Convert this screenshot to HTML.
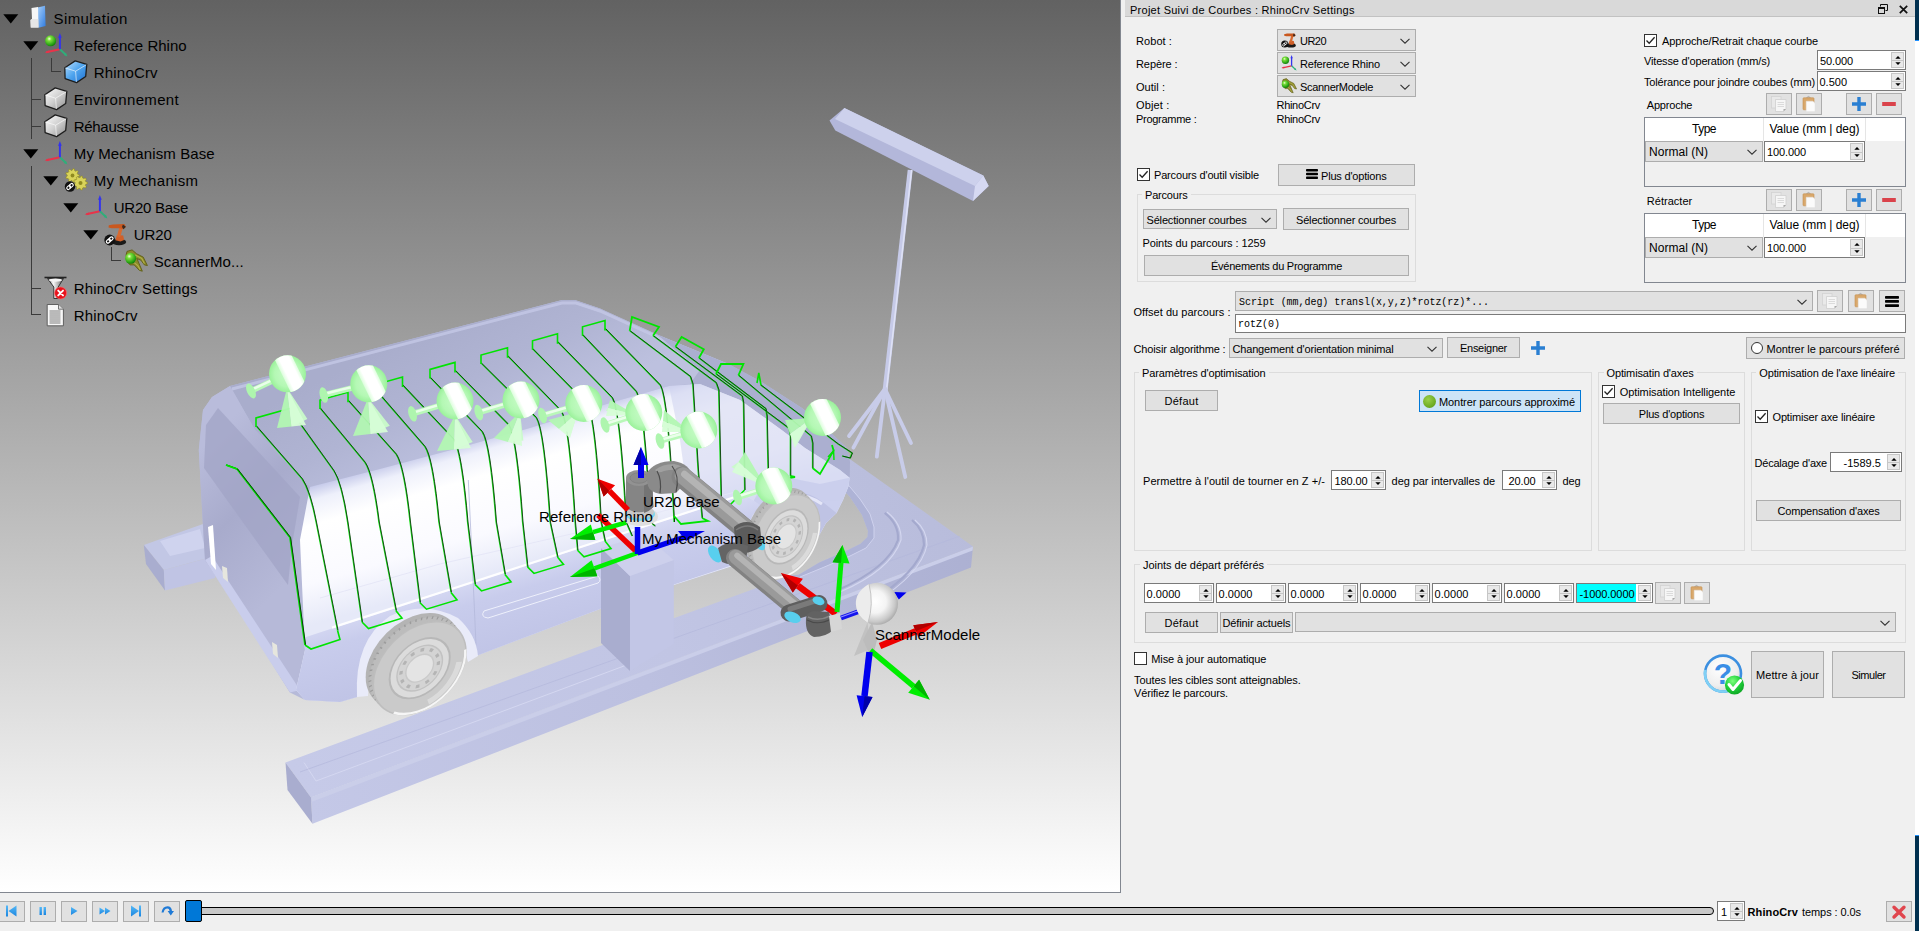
<!DOCTYPE html>
<html lang="fr"><head><meta charset="utf-8"><title>RoboDK - Projet Suivi de Courbes</title>
<style>
html,body{margin:0;padding:0;}
body{width:1919px;height:931px;overflow:hidden;position:relative;background:#f0f0f0;font-family:"Liberation Sans",sans-serif;font-size:11px;color:#000;}
#view{position:absolute;left:0;top:0;width:1120px;height:892px;background:linear-gradient(#626262,#ffffff);overflow:hidden;}
#view svg{position:absolute;left:0;top:0;}
.t{position:absolute;white-space:pre;line-height:1;}
.b{position:absolute;box-sizing:border-box;}
.btn{position:absolute;box-sizing:border-box;background:#e1e1e1;border:1px solid #adadad;}
.cmb{position:absolute;box-sizing:border-box;background:#e1e1e1;border:1px solid #adadad;}
.spn{position:absolute;box-sizing:border-box;background:#fff;border:1px solid #7a7a7a;}
.grp{position:absolute;box-sizing:border-box;border:1px solid #dcdcdc;}
.chk{position:absolute;box-sizing:border-box;width:13px;height:13px;background:#fff;border:1px solid #333;}
svg{display:block;overflow:visible;}

</style></head>
<body>
<svg width="0" height="0" style="position:absolute"><defs><radialGradient id="gsph" cx="0.38" cy="0.32" r="0.75"><stop offset="0" stop-color="#f4ffe0"/><stop offset="0.25" stop-color="#7be03a"/><stop offset="0.8" stop-color="#1f9a10"/><stop offset="1" stop-color="#0d6a08"/></radialGradient><linearGradient id="gblue" x1="0" y1="0" x2="0" y2="1"><stop offset="0" stop-color="#55b8f6"/><stop offset="1" stop-color="#1b86e0"/></linearGradient><linearGradient id="gcubeb" x1="0" y1="0" x2="1" y2="1"><stop offset="0" stop-color="#bfe2ff"/><stop offset="0.5" stop-color="#4ea4ee"/><stop offset="1" stop-color="#1e6fd0"/></linearGradient><linearGradient id="gcubeg" x1="0" y1="0" x2="1" y2="1"><stop offset="0" stop-color="#ffffff"/><stop offset="0.5" stop-color="#d0d0d0"/><stop offset="1" stop-color="#8c8c8c"/></linearGradient><radialGradient id="ghelp" cx="0.4" cy="0.35" r="0.7"><stop offset="0" stop-color="#ffffff"/><stop offset="0.7" stop-color="#eeeeee"/><stop offset="1" stop-color="#d4d4d4"/></radialGradient><radialGradient id="gok" cx="0.4" cy="0.3" r="0.8"><stop offset="0" stop-color="#7dff7d"/><stop offset="0.5" stop-color="#1fd13a"/><stop offset="1" stop-color="#0a9a1e"/></radialGradient></defs></svg>
<div id="view"><svg width="1120" height="892" viewBox="0 0 1120 892">
<defs>
<linearGradient id="bgg" gradientUnits="userSpaceOnUse" x1="0" y1="0" x2="0" y2="892"><stop offset="0" stop-color="#626262"/><stop offset="1" stop-color="#ffffff"/></linearGradient>
<radialGradient id="gtar" cx="0.5" cy="0.5" r="0.5"><stop offset="0" stop-color="#c8fbc8"/><stop offset="0.7" stop-color="#b4f8b4"/><stop offset="1" stop-color="#9af19a"/></radialGradient>
<linearGradient id="gband" x1="0" y1="0" x2="1" y2="0"><stop offset="0" stop-color="#dcfedc"/><stop offset="0.25" stop-color="#ffffff"/><stop offset="0.8" stop-color="#ffffff"/><stop offset="1" stop-color="#e0fee0"/></linearGradient>
<linearGradient id="gside" gradientUnits="userSpaceOnUse" x1="455" y1="445" x2="492" y2="573"><stop offset="0" stop-color="#c6caea"/><stop offset="0.1" stop-color="#eef0fb"/><stop offset="0.28" stop-color="#ffffff"/><stop offset="0.7" stop-color="#fafaff"/><stop offset="1" stop-color="#e6e9f8"/></linearGradient>
<linearGradient id="glow" gradientUnits="userSpaceOnUse" x1="492" y1="573" x2="515" y2="650"><stop offset="0" stop-color="#d6d9f3"/><stop offset="0.3" stop-color="#c8ccec"/><stop offset="1" stop-color="#c0c4e6"/></linearGradient>
<linearGradient id="groof" gradientUnits="userSpaceOnUse" x1="380" y1="350" x2="440" y2="470"><stop offset="0" stop-color="#a9adcc"/><stop offset="0.5" stop-color="#b0b4d3"/><stop offset="1" stop-color="#bdc1df"/></linearGradient>
<linearGradient id="grear" gradientUnits="userSpaceOnUse" x1="200" y1="450" x2="310" y2="560"><stop offset="0" stop-color="#b9bcdb"/><stop offset="0.45" stop-color="#a8abcc"/><stop offset="1" stop-color="#b6b9d8"/></linearGradient>
<linearGradient id="gcab" gradientUnits="userSpaceOnUse" x1="700" y1="360" x2="800" y2="520"><stop offset="0" stop-color="#b9bee0"/><stop offset="0.5" stop-color="#d5d8f0"/><stop offset="1" stop-color="#bfc4e6"/></linearGradient>
<linearGradient id="gtop" gradientUnits="userSpaceOnUse" x1="300" y1="790" x2="960" y2="500"><stop offset="0" stop-color="#c6cae8"/><stop offset="0.55" stop-color="#c1c5e4"/><stop offset="1" stop-color="#b8bcdb"/></linearGradient>
<linearGradient id="gfront" gradientUnits="userSpaceOnUse" x1="300" y1="790" x2="960" y2="500"><stop offset="0" stop-color="#c4c8e7"/><stop offset="0.5" stop-color="#bcc0e0"/><stop offset="1" stop-color="#acb0d2"/></linearGradient>
<radialGradient id="gwheel" cx="0.45" cy="0.45" r="0.6"><stop offset="0" stop-color="#f2f2f2"/><stop offset="0.7" stop-color="#dedede"/><stop offset="1" stop-color="#c4c4c4"/></radialGradient>
<linearGradient id="garm" x1="0" y1="0" x2="1" y2="1"><stop offset="0" stop-color="#8e8e8e"/><stop offset="0.5" stop-color="#7a7a7a"/><stop offset="1" stop-color="#5c5c5c"/></linearGradient>
<radialGradient id="gsc" cx="0.45" cy="0.45" r="0.6"><stop offset="0" stop-color="#ffffff"/><stop offset="0.45" stop-color="#f4f4f4"/><stop offset="0.8" stop-color="#c8c8c8"/><stop offset="1" stop-color="#a0a0a0"/></radialGradient>
</defs>
<polygon points="844.4,108.0 983.3,175.6 988.7,186.0 973.0,201.0 835.3,130.5 829.5,120.6" fill="#b3b7da" />
<polygon points="844.4,108.0 983.3,175.6 975.0,186.0 835.0,119.0" fill="#cdd1ec" />
<polygon points="983.3,175.6 988.7,186.0 973.0,201.0 975.0,186.0" fill="#d6d9f2" />
<line x1="910.2" y1="170" x2="885" y2="391" stroke="#c6cae8" stroke-width="5"/>
<line x1="911.6" y1="170" x2="886.4" y2="391" stroke="#dfe2f5" stroke-width="1.5"/>
<line x1="885" y1="389" x2="853.4" y2="447.7" stroke="#c8cce9" stroke-width="3.8" stroke-linecap="round"/>
<line x1="885" y1="389" x2="849" y2="436" stroke="#c8cce9" stroke-width="3.8" stroke-linecap="round"/>
<line x1="885" y1="389" x2="876.8" y2="456.7" stroke="#c8cce9" stroke-width="3.8" stroke-linecap="round"/>
<line x1="885" y1="389" x2="905.3" y2="477" stroke="#c8cce9" stroke-width="3.8" stroke-linecap="round"/>
<line x1="885" y1="389" x2="911" y2="443" stroke="#c8cce9" stroke-width="3.8" stroke-linecap="round"/>
<polygon points="143.8,545.0 203.0,524.0 215.0,556.0 163.8,570.0" fill="#c2c7e5" />
<polygon points="143.8,545.0 163.8,570.0 165.0,590.5 146.0,564.0" fill="#a9adcf" />
<polygon points="163.8,570.0 215.0,556.0 215.0,578.0 165.0,590.5" fill="#c0c4e4" />
<polygon points="160.0,541.0 200.0,529.0 205.0,548.0 170.0,556.0" fill="#cfd3ee" />
<polygon points="285.5,762.5 600.0,646.0 673.0,618.5 790.0,575.6 798.7,574.7 819.4,562.6 847.0,550.6 860.6,543.7 867.5,537.0 868.0,531.0 862.0,515.0 850.0,497.0 838.0,484.0 843.4,454.4 973.0,546.5 311.0,797.5" fill="url(#gtop)" />
<polygon points="311.0,797.5 973.0,546.5 971.0,567.5 312.5,823.8" fill="url(#gfront)" />
<polygon points="311.0,797.5 973.0,546.5 972.6,550.5 311.3,802.0" fill="#cacee9" />
<polygon points="285.5,762.5 311.0,797.5 312.5,823.8 287.5,790.0" fill="#a9adcf" />
<polyline points="304.0,762.5 316.0,781.0 640.0,660.0" fill="none" stroke="#d4d7f0" stroke-width="1" />
<polyline points="300.0,772.0 960.0,536.0" fill="none" stroke="#b4b8dc" stroke-width="1" stroke-opacity="0.7"/>
<polygon points="790.0,575.6 798.7,574.7 819.4,562.6 847.0,550.6 860.6,543.7 867.5,537.0 868.0,531.0 862.0,515.0 850.0,497.0 838.0,484.0 840.0,478.0 848.6,485.3 860.0,499.0 870.0,514.0 874.0,527.0 874.0,538.0 866.0,548.0 850.0,556.0 822.0,568.0 800.0,577.0" fill="#aeb3d6" />
<polyline points="800.0,577.0 822.0,568.0 850.0,556.0 866.0,548.0 874.0,538.0 874.0,527.0 870.0,514.0 860.0,499.0 848.6,485.3 840.0,478.0" fill="none" stroke="#cfd2ee" stroke-width="1" />
<path d="M838 590 Q888 568 898 540 Q899 524 884.7 512.8" fill="none" stroke="#a4a9ce" stroke-width="2.2" />
<path d="M840 592 Q891 570 901 540 Q902 524 887 512" fill="none" stroke="#d4d7f0" stroke-width="1.1" />
<path d="M872 601 Q918 572 924 545 Q924 530 912 520" fill="none" stroke="#a4a9ce" stroke-width="2.2" />
<path d="M874 603 Q921 574 927 545 Q927 530 915 520" fill="none" stroke="#d4d7f0" stroke-width="1.1" />
<polygon points="230.0,386.0 562.0,300.0 575.0,300.0 600.0,308.5 657.0,334.5 728.5,364.0 760.0,381.0 802.7,408.6 830.0,432.0 847.0,448.0 850.0,462.0 849.6,477.8 848.6,486.0 843.0,500.0 836.5,513.0 826.0,523.0 812.0,548.0 800.0,562.0 745.0,562.0 600.0,609.0 476.0,656.0 474.0,640.0 456.0,622.0 430.0,611.0 400.0,614.0 375.0,632.0 362.0,660.0 357.0,697.0 340.0,702.0 305.0,700.0 290.0,692.5 245.0,620.0 205.0,560.0 202.5,517.5 198.8,450.0 203.0,410.0 212.0,397.0" fill="#b6bad9" />
<polygon points="230.0,386.0 562.0,300.0 575.0,300.0 600.0,308.5 657.0,334.5 728.5,364.0 700.0,370.0 690.0,384.0 669.0,386.0 610.0,403.0 530.0,428.0 455.0,449.0 380.0,469.0 310.0,487.0 255.0,430.0" fill="url(#groof)" />
<polyline points="232.0,389.0 562.0,303.0 576.0,303.0 600.0,311.0 657.0,337.0 728.0,367.0" fill="none" stroke="#c4c8e6" stroke-width="3" stroke-opacity="0.8"/>
<polygon points="203.0,410.0 212.0,397.0 230.0,386.0 255.0,430.0 310.0,487.0 300.0,540.0 305.0,650.0 296.0,690.0 290.0,692.5 245.0,620.0 205.0,560.0 202.5,517.5 198.8,450.0" fill="url(#grear)" />
<polygon points="206.0,425.0 218.0,408.0 300.0,497.0 292.0,545.0 288.0,585.0 204.0,468.0" fill="#a1a4c6" fill-opacity="0.75"/>
<polygon points="205.0,560.0 212.0,556.0 300.0,690.0 290.0,692.5" fill="#c9cdec" />
<polygon points="208.0,527.0 213.0,525.0 216.0,570.0 211.0,564.0" fill="#ffffff" />
<polygon points="222.0,566.0 227.0,568.0 228.0,582.0 223.0,578.0" fill="#e6e6de" />
<polygon points="272.0,642.0 277.0,645.0 278.0,658.0 273.0,654.0" fill="#e6e6de" />
<polygon points="657.0,334.5 728.5,364.0 760.0,381.0 802.7,408.6 830.0,432.0 847.0,448.0 850.0,462.0 849.6,477.8 840.0,470.0 805.0,448.0 783.0,431.0 740.0,400.0 700.0,384.0 690.0,384.0 700.0,370.0" fill="#abafd0" />
<polygon points="310.0,487.0 380.0,469.0 455.0,449.0 530.0,428.0 610.0,403.0 669.0,386.0 700.0,384.0 740.0,400.0 783.0,431.0 805.0,448.0 840.0,470.0 849.6,477.8 848.6,486.0 843.0,500.0 836.5,513.0 826.0,523.0 812.0,548.0 800.0,562.0 745.0,562.0 600.0,609.0 476.0,656.0 474.0,640.0 456.0,622.0 430.0,611.0 400.0,614.0 375.0,632.0 362.0,660.0 357.0,697.0 340.0,702.0 305.0,700.0 296.0,690.0 305.0,650.0 300.0,540.0" fill="url(#gside)" />
<polygon points="669.0,386.0 700.0,384.0 740.0,400.0 783.0,431.0 805.0,448.0 840.0,470.0 849.6,477.8 843.0,500.0 760.0,505.0 745.0,494.7 690.0,512.0 680.0,440.0" fill="#cdd1ee" fill-opacity="0.55"/>
<polygon points="742.0,520.0 760.0,490.0 790.0,478.0 820.0,484.0 849.6,477.8 848.6,486.0 843.0,500.0 836.5,513.0 826.0,523.0 818.0,508.0 800.0,494.0 775.0,496.0 755.0,515.0 748.0,545.0 745.0,562.0 738.0,562.0" fill="#c9cdec" fill-opacity="0.9"/>
<polygon points="303.0,638.0 332.0,628.6 470.0,584.0 600.0,541.7 745.0,494.7 760.0,505.0 748.0,560.0 600.0,609.0 476.0,656.0 474.0,640.0 456.0,622.0 430.0,611.0 400.0,614.0 375.0,632.0 362.0,660.0 357.0,697.0 340.0,702.0 305.0,700.0 296.0,690.0 305.0,650.0" fill="url(#glow)" />
<polyline points="332.0,627.6 470.0,583.0 600.0,540.7 745.0,493.7" fill="none" stroke="#ffffff" stroke-width="2.2" stroke-opacity="0.95"/>
<polyline points="320.0,598.0 440.0,564.0 612.0,524.7 735.0,492.0" fill="none" stroke="#e4e6f6" stroke-width="1" stroke-opacity="0.9"/>
<path d="M484 611 L598 576 Q602 580 598 583 L488 618 Q480 617 484 611 Z" fill="none" stroke="#eef0fb" stroke-width="1" />
<polyline points="468.3,480.0 470.5,525.0 474.0,600.0 476.0,645.0" fill="none" stroke="#b4b9da" stroke-width="0.8" />
<path d="M357 697 Q354 640 390 616 Q425 600 458 618 Q476 634 478 656 L468 662 Q462 640 448 630 Q424 618 398 628 Q368 648 368 696 Z" fill="#e9ebf9" />
<g transform="matrix(47 -17 0 44 412.7 660.2)"><circle r="1" fill="#b4b4b4"/></g><g transform="matrix(47 -17 0 44 416.2 664.2)"><circle r="1" fill="#bcbcbc"/></g><g transform="matrix(47 -17 0 44 415.5 663.4)"><circle r="0.97" fill="none" stroke="#9c9c9c" stroke-width="0.06" stroke-dasharray="0.03 0.09"/></g><g transform="matrix(47 -17 0 44 419.7 668.2)"><circle r="1" fill="#bebebe"/><circle r="0.97" fill="#cacaca"/><circle r="0.66" fill="#b8b8b8"/><circle r="0.62" fill="#dcdcdc"/><circle r="0.50" fill="#c2c2c2"/><circle r="0.47" fill="#d4d4d4"/><circle r="0.40" fill="none" stroke="#b4b4b4" stroke-width="0.07" stroke-dasharray="0.08 0.13"/><circle r="0.31" fill="#c9c9c9"/><circle r="0.28" fill="#e4e4e4"/></g><g transform="matrix(47 -17 0 44 419.7 668.2)"><path d="M-0.55 0.80 A0.97 0.97 0 0 0 0.97 -0.05" fill="none" stroke="#f6f6f6" stroke-width="0.05"/><path d="M0.2 0.9 A0.92 0.92 0 0 0 0.9 0.2 L0.78 0.16 A0.8 0.8 0 0 1 0.16 0.78 Z" fill="#e2e2e2" fill-opacity="0.7"/></g>
<path d="M745 562 Q740 520 768 498 Q800 484 824 503 L836.5 513 L826 523 L812 548 L800 562 Z" fill="#bfc3e4" />
<path d="M748 545 Q746 515 770 500 Q798 488 822 504" fill="none" stroke="#e4e6f8" stroke-width="3" />
<g transform="matrix(34.5 -13 0 40.5 780.0 530.5)"><circle r="1" fill="#b4b4b4"/></g><g transform="matrix(34.5 -13 0 40.5 783.0 533.5)"><circle r="1" fill="#bcbcbc"/></g><g transform="matrix(34.5 -13 0 40.5 782.4 532.9)"><circle r="0.97" fill="none" stroke="#9c9c9c" stroke-width="0.06" stroke-dasharray="0.03 0.09"/></g><g transform="matrix(34.5 -13 0 40.5 786.0 536.5)"><circle r="1" fill="#bebebe"/><circle r="0.97" fill="#cacaca"/><circle r="0.66" fill="#b8b8b8"/><circle r="0.62" fill="#dcdcdc"/><circle r="0.50" fill="#c2c2c2"/><circle r="0.47" fill="#d4d4d4"/><circle r="0.40" fill="none" stroke="#b4b4b4" stroke-width="0.07" stroke-dasharray="0.08 0.13"/><circle r="0.31" fill="#c9c9c9"/><circle r="0.28" fill="#e4e4e4"/></g><g transform="matrix(34.5 -13 0 40.5 786.0 536.5)"><path d="M-0.55 0.80 A0.97 0.97 0 0 0 0.97 -0.05" fill="none" stroke="#f6f6f6" stroke-width="0.05"/><path d="M0.2 0.9 A0.92 0.92 0 0 0 0.9 0.2 L0.78 0.16 A0.8 0.8 0 0 1 0.16 0.78 Z" fill="#e2e2e2" fill-opacity="0.7"/></g>
<polygon points="601.0,548.0 630.0,576.0 630.0,671.0 601.0,643.0" fill="#a9adcf" />
<polygon points="630.0,576.0 673.8,560.0 673.8,644.0 630.0,671.0" fill="#c2c6e6" />
<polygon points="601.0,548.0 630.0,576.0 673.8,560.0 645.0,535.0" fill="#cdd0ec" />
<path d="M256.0 425.9 L302.0 478.8 Q310.0 490.8 316.0 522 L337.5 630.2" fill="none" stroke="#00e400" stroke-width="1.25" stroke-opacity="0.9"/><path d="M256.0 425.9 L302.0 478.8 Q310.0 490.8 316.0 522 L337.5 630.2" fill="none" stroke="#0c3a0c" stroke-width="0.9" transform="translate(0.5 0)"/><path d="M294.0 415.3 L333.5 470.5 Q341.5 482.5 347.5 522 L362.0 622.0" fill="none" stroke="#00e400" stroke-width="1.25" stroke-opacity="0.9"/><path d="M294.0 415.3 L333.5 470.5 Q341.5 482.5 347.5 522 L362.0 622.0" fill="none" stroke="#0c3a0c" stroke-width="0.9" transform="translate(0.5 0)"/><path d="M320.0 408.1 L364.8 462.3 Q372.8 474.3 378.8 522 L396.0 610.7" fill="none" stroke="#00e400" stroke-width="1.25" stroke-opacity="0.9"/><path d="M320.0 408.1 L364.8 462.3 Q372.8 474.3 378.8 522 L396.0 610.7" fill="none" stroke="#0c3a0c" stroke-width="0.9" transform="translate(0.5 0)"/><path d="M348.0 400.3 L396.0 454.2 Q404.0 466.2 410.0 522 L420.0 602.7" fill="none" stroke="#00e400" stroke-width="1.25" stroke-opacity="0.9"/><path d="M348.0 400.3 L396.0 454.2 Q404.0 466.2 410.0 522 L420.0 602.7" fill="none" stroke="#0c3a0c" stroke-width="0.9" transform="translate(0.5 0)"/><path d="M377.5 392.0 L424.8 446.6 Q432.8 458.6 438.8 522 L451.0 592.4" fill="none" stroke="#00e400" stroke-width="1.25" stroke-opacity="0.9"/><path d="M377.5 392.0 L424.8 446.6 Q432.8 458.6 438.8 522 L451.0 592.4" fill="none" stroke="#0c3a0c" stroke-width="0.9" transform="translate(0.5 0)"/><path d="M402.5 385.0 L453.5 439.1 Q461.5 451.1 467.5 522 L475.0 584.4" fill="none" stroke="#00e400" stroke-width="1.25" stroke-opacity="0.9"/><path d="M402.5 385.0 L453.5 439.1 Q461.5 451.1 467.5 522 L475.0 584.4" fill="none" stroke="#0c3a0c" stroke-width="0.9" transform="translate(0.5 0)"/><path d="M430.0 377.4 L482.0 431.6 Q490.0 443.6 496.0 522 L505.0 574.4" fill="none" stroke="#00e400" stroke-width="1.25" stroke-opacity="0.9"/><path d="M430.0 377.4 L482.0 431.6 Q490.0 443.6 496.0 522 L505.0 574.4" fill="none" stroke="#0c3a0c" stroke-width="0.9" transform="translate(0.5 0)"/><path d="M455.0 370.4 L508.5 424.7 Q516.5 436.7 522.5 522 L527.5 566.9" fill="none" stroke="#00e400" stroke-width="1.25" stroke-opacity="0.9"/><path d="M455.0 370.4 L508.5 424.7 Q516.5 436.7 522.5 522 L527.5 566.9" fill="none" stroke="#0c3a0c" stroke-width="0.9" transform="translate(0.5 0)"/><path d="M481.0 363.1 L536.0 417.5 Q544.0 429.5 550.0 522 L557.5 556.9" fill="none" stroke="#00e400" stroke-width="1.25" stroke-opacity="0.9"/><path d="M481.0 363.1 L536.0 417.5 Q544.0 429.5 550.0 522 L557.5 556.9" fill="none" stroke="#0c3a0c" stroke-width="0.9" transform="translate(0.5 0)"/><path d="M507.5 355.8 L561.0 410.9 Q569.0 422.9 575.0 522 L577.5 550.3" fill="none" stroke="#00e400" stroke-width="1.25" stroke-opacity="0.9"/><path d="M507.5 355.8 L561.0 410.9 Q569.0 422.9 575.0 522 L577.5 550.3" fill="none" stroke="#0c3a0c" stroke-width="0.9" transform="translate(0.5 0)"/><path d="M532.5 348.8 L587.0 404.1 Q595.0 416.1 601.0 522 L605.0 541.1" fill="none" stroke="#00e400" stroke-width="1.25" stroke-opacity="0.9"/><path d="M532.5 348.8 L587.0 404.1 Q595.0 416.1 601.0 522 L605.0 541.1" fill="none" stroke="#0c3a0c" stroke-width="0.9" transform="translate(0.5 0)"/><path d="M557.5 341.8 L612.0 397.6 Q620.0 409.6 626.0 522 L632.0 536.0" fill="none" stroke="#00e400" stroke-width="1.25" stroke-opacity="0.9"/><path d="M557.5 341.8 L612.0 397.6 Q620.0 409.6 626.0 522 L632.0 536.0" fill="none" stroke="#0c3a0c" stroke-width="0.9" transform="translate(0.5 0)"/><path d="M582.5 334.8 L636.0 391.3 Q644.0 403.3 650.0 522 L655.0 526.0" fill="none" stroke="#00e400" stroke-width="1.25" stroke-opacity="0.9"/><path d="M582.5 334.8 L636.0 391.3 Q644.0 403.3 650.0 522 L655.0 526.0" fill="none" stroke="#0c3a0c" stroke-width="0.9" transform="translate(0.5 0)"/><path d="M605.0 328.5 L660.0 385.0 Q668.0 397.0 674.0 522 L674.0 516.0" fill="none" stroke="#00e400" stroke-width="1.25" stroke-opacity="0.9"/><path d="M605.0 328.5 L660.0 385.0 Q668.0 397.0 674.0 522 L674.0 516.0" fill="none" stroke="#0c3a0c" stroke-width="0.9" transform="translate(0.5 0)"/><polyline points="256.0,426.9 256.0,417.9 294.0,407.3 294.0,417.3" fill="none" stroke="#00e400" stroke-width="1.6" /><polyline points="320.0,409.1 320.0,400.1 348.0,392.3 348.0,402.3" fill="none" stroke="#00e400" stroke-width="1.6" /><polyline points="377.5,393.0 377.5,384.0 402.5,377.0 402.5,387.0" fill="none" stroke="#00e400" stroke-width="1.6" /><polyline points="430.0,378.4 430.0,369.4 455.0,362.4 455.0,372.4" fill="none" stroke="#00e400" stroke-width="1.6" /><polyline points="481.0,364.1 481.0,355.1 507.5,347.8 507.5,357.8" fill="none" stroke="#00e400" stroke-width="1.6" /><polyline points="532.5,349.8 532.5,340.8 557.5,333.8 557.5,343.8" fill="none" stroke="#00e400" stroke-width="1.6" /><polyline points="582.5,335.8 582.5,326.8 605.0,320.5 605.0,330.5" fill="none" stroke="#00e400" stroke-width="1.6" /><polyline points="226.0,465.0 237.0,469.0 290.0,537.5 305.0,645.0" fill="none" stroke="#00e400" stroke-width="1.8" /><polyline points="226.6,465.0 237.6,469.0 290.6,537.5 305.6,645.0" fill="none" stroke="#0c3a0c" stroke-width="1.0" /><polyline points="226.0,465.0 237.0,469.0" fill="none" stroke="#00e400" stroke-width="1.6" /><polyline points="305.0,645.0 311.0,649.0 340.0,639.5 337.5,630.2" fill="none" stroke="#00e400" stroke-width="1.6" /><polyline points="362.0,622.0 368.5,628.5 402.0,618.2 396.0,610.7" fill="none" stroke="#00e400" stroke-width="1.6" /><polyline points="420.0,602.7 426.5,609.2 457.0,599.9 451.0,592.4" fill="none" stroke="#00e400" stroke-width="1.6" /><polyline points="475.0,584.4 481.5,590.9 511.0,581.9 505.0,574.4" fill="none" stroke="#00e400" stroke-width="1.6" /><polyline points="527.5,566.9 534.0,573.4 563.5,564.4 557.5,556.9" fill="none" stroke="#00e400" stroke-width="1.6" /><polyline points="577.5,550.3 584.0,556.8 611.0,548.6 605.0,541.1" fill="none" stroke="#00e400" stroke-width="1.6" /><polyline points="629.7,330.8 690.2,376.5 692.7,384.0 698.0,470.0 702.0,518.0" fill="none" stroke="#00e400" stroke-width="1.25" stroke-opacity="0.9"/><polyline points="630.2,330.8 690.7,376.5 693.2,384.0 698.5,470.0 702.5,518.0" fill="none" stroke="#0c3a0c" stroke-width="0.9" /><polyline points="653.0,335.7 716.0,382.7 718.6,390.0 721.0,497.0 724.0,512.0" fill="none" stroke="#00e400" stroke-width="1.25" stroke-opacity="0.9"/><polyline points="653.5,335.7 716.5,382.7 719.1,390.0 721.5,497.0 724.5,512.0" fill="none" stroke="#0c3a0c" stroke-width="0.9" /><polyline points="675.4,346.8 742.0,396.0 743.4,403.0 744.6,490.0" fill="none" stroke="#00e400" stroke-width="1.25" stroke-opacity="0.9"/><polyline points="675.9,346.8 742.5,396.0 743.9,403.0 745.1,490.0" fill="none" stroke="#0c3a0c" stroke-width="0.9" /><polyline points="698.9,358.0 765.6,408.6 766.8,416.0 768.0,470.0" fill="none" stroke="#00e400" stroke-width="1.25" stroke-opacity="0.9"/><polyline points="699.4,358.0 766.1,408.6 767.3,416.0 768.5,470.0" fill="none" stroke="#0c3a0c" stroke-width="0.9" /><polyline points="716.0,374.0 789.0,428.4 790.3,436.0 790.3,476.0" fill="none" stroke="#00e400" stroke-width="1.25" stroke-opacity="0.9"/><polyline points="716.5,374.0 789.5,428.4 790.8,436.0 790.8,476.0" fill="none" stroke="#0c3a0c" stroke-width="0.9" /><polyline points="738.4,375.3 811.0,436.0 812.5,443.0 812.5,468.0" fill="none" stroke="#00e400" stroke-width="1.25" stroke-opacity="0.9"/><polyline points="738.9,375.3 811.5,436.0 813.0,443.0 813.0,468.0" fill="none" stroke="#0c3a0c" stroke-width="0.9" /><polyline points="760.6,385.0 838.0,444.0 852.0,453.0 850.0,458.0 842.0,456.0" fill="none" stroke="#00e400" stroke-width="1.25" stroke-opacity="0.9"/><polyline points="761.1,385.0 838.5,444.0 852.5,453.0 850.5,458.0 842.5,456.0" fill="none" stroke="#0c3a0c" stroke-width="0.9" /><polyline points="629.7,330.8 632.0,317.0 659.0,327.0 653.0,335.7" fill="none" stroke="#00e400" stroke-width="1.8" /><polyline points="675.4,346.8 681.6,337.0 703.8,349.3 698.9,358.0" fill="none" stroke="#00e400" stroke-width="1.8" /><polyline points="716.0,374.0 721.0,364.0 743.4,364.0 738.4,375.3" fill="none" stroke="#00e400" stroke-width="1.8" /><polyline points="757.0,383.0 758.8,373.0 761.0,385.0" fill="none" stroke="#00e400" stroke-width="1.6" /><polyline points="674.0,516.0 681.0,524.0 708.0,521.0 702.0,518.0" fill="none" stroke="#00e400" stroke-width="1.8" /><polyline points="724.0,512.0 730.0,505.0 744.6,490.0" fill="none" stroke="#00e400" stroke-width="1.6" /><polyline points="768.0,470.0 776.0,480.0 795.0,477.0 790.3,476.0" fill="none" stroke="#00e400" stroke-width="1.8" /><polyline points="812.5,468.0 820.0,474.0 833.6,450.7 832.0,445.0" fill="none" stroke="#00e400" stroke-width="1.8" /><polyline points="828.0,457.0 833.6,450.7 834.0,460.0" fill="none" stroke="#00e400" stroke-width="1.4" />
<ellipse cx="640" cy="516.5" rx="18" ry="9.5" fill="#dedede"/><ellipse cx="640" cy="514" rx="15" ry="7" fill="#7fd6ec"/><ellipse cx="640" cy="512" rx="14" ry="6.5" fill="#c8c8c8"/><path d="M626 478 L625.8 508 Q640 517 653.4 507 L652 477 Z" fill="#858585" /><path d="M644 478 L644 513 Q650 511 653.4 507 L652 477 Z" fill="#747474" /><ellipse cx="639" cy="478" rx="13" ry="8" fill="#929292"/><ellipse cx="639" cy="478" rx="9" ry="5.2" fill="#8c8c8c" stroke="#7c7c7c" stroke-width="0.7"/><path d="M646 474 Q654 461 674 461 Q690 464 692 476 L676 493 L660 494 Q650 492 648 486 Z" fill="#8a8a8a" /><path d="M655 470 Q662 464 674 464 Q684 466 688 472 Q676 468 664 471 Q658 474 655 470 Z" fill="#a0a0a0" /><path d="M657 471 Q662 480 660 493" fill="none" stroke="#4c4c4c" stroke-width="1.2" /><line x1="682.0" y1="477.0" x2="746.0" y2="530.0" stroke="#828282" stroke-width="21" stroke-linecap="round"/><line x1="683.1" y1="475.7" x2="747.1" y2="528.7" stroke="#9a9a9a" stroke-width="16.8" stroke-linecap="round"/><line x1="684.4" y1="474.1" x2="748.4" y2="527.1" stroke="#b4b4b4" stroke-width="6.7" stroke-linecap="round"/><path d="M672 466 Q680 476 676 492" fill="none" stroke="#4c4c4c" stroke-width="1.2" /><ellipse cx="715" cy="554" rx="5.5" ry="9.5" fill="#58cfee" transform="rotate(-35 715 554)"/><ellipse cx="759.5" cy="543" rx="4.5" ry="8" fill="#58cfee" transform="rotate(-30 759.5 543)"/><path d="M734 527 Q746 517 760 527 L762 545 Q750 556 736 552 Z" fill="#5c5c5c" /><path d="M718 548 Q730 538 748 546 L746 561 Q732 567 722 562 Z" fill="#646464" /><path d="M736 530 Q748 522 758 530" fill="none" stroke="#7a7a7a" stroke-width="1.5" /><line x1="735.0" y1="558.0" x2="795.0" y2="608.0" stroke="#828282" stroke-width="18" stroke-linecap="round"/><line x1="735.9" y1="556.9" x2="795.9" y2="606.9" stroke="#9a9a9a" stroke-width="14.4" stroke-linecap="round"/><line x1="737.1" y1="555.5" x2="797.1" y2="605.5" stroke="#b4b4b4" stroke-width="5.8" stroke-linecap="round"/><line x1="836.0" y1="614.0" x2="797.8" y2="585.6" stroke="#ee0000" stroke-width="6.5"/><polygon points="781.0,573.0 802.9,578.7 792.8,592.4" fill="#ee0000" /><polygon points="781.0,573.0 797.8,585.6 792.8,592.4" fill="#b00000" /><line x1="789" y1="613" x2="819" y2="603.5" stroke="#5e5e5e" stroke-width="17" stroke-linecap="round"/><line x1="790" y1="609" x2="818" y2="600" stroke="#7a7a7a" stroke-width="5" stroke-linecap="round"/><ellipse cx="792.5" cy="617.2" rx="8.6" ry="5.2" fill="#58cfee" transform="rotate(22 792.5 617.2)"/><ellipse cx="818.5" cy="600.8" rx="6.2" ry="4" fill="#58cfee" transform="rotate(20 818.5 600.8)"/><path d="M806 619 Q806 612 814 611 L829 612 L833 630 Q826 637 814 637 Q805 634 806 619 Z" fill="#626262" /><path d="M807 620 Q818 626 831 619" fill="none" stroke="#4a4a4a" stroke-width="1.2" /><path d="M808 617 Q818 622 830 616" fill="none" stroke="#858585" stroke-width="1.5" /><polygon points="829.0,616.0 840.0,613.0 842.0,629.0 831.0,632.0" fill="#d6d6d6" /><line x1="841" y1="618" x2="863" y2="610" stroke="#1414ee" stroke-width="5"/><line x1="841" y1="617" x2="863" y2="609" stroke="#9090ff" stroke-width="1.2"/><polygon points="867.7,622.0 854.0,655.9 869.5,649.5" fill="#c2c2c2" /><polygon points="867.7,622.0 869.5,649.5 881.4,655.0 880.5,623.9" fill="#d2d2d2" /><polygon points="872.0,622.0 863.0,640.0 872.0,660.0 877.0,640.0" fill="#bcbcbc" /><polygon points="894.0,592.0 906.5,592.5 898.8,599.5" fill="#0000ee" /><circle cx="877" cy="603.8" r="21" fill="url(#gsc)"/><path d="M869 584 Q855.5 592 855.8 604 Q856.5 616 868 623 Q874 604 869 584 Z" fill="#ececec" /><path d="M869 584 Q874 604 868 623" fill="none" stroke="#c4c4c4" stroke-width="1" />
<polygon points="287.0,388.0 291.5,426.5 307.4,418.9" fill="#c9fbc9" fill-opacity="0.95"/><polygon points="287.0,388.0 277.0,428.0 291.5,426.5" fill="#b2f7b2" fill-opacity="0.95"/><polygon points="287.0,388.0 291.5,426.5 306.0,425.0" fill="#d6fdd6" fill-opacity="0.95"/><line x1="287.5" y1="373.8" x2="251.0" y2="391.0" stroke="#b9f8b9" stroke-width="5.6"/><line x1="287.5" y1="372.8" x2="251.0" y2="390.0" stroke="#eafeea" stroke-width="2.4"/><ellipse cx="251.0" cy="391.0" rx="4" ry="8" fill="#aef5ae" transform="rotate(154.7 251.0 391.0)"/><clipPath id="tc1"><circle cx="287.5" cy="373.8" r="18.5"/></clipPath><circle cx="287.5" cy="373.8" r="18.5" fill="url(#gtar)"/><g clip-path="url(#tc1)"><rect x="282.3" y="351.6" width="17.0" height="44.4" fill="url(#gband)" transform="rotate(-26 287.5 373.8)"/></g>
<polygon points="368.0,398.0 370.5,434.0 389.8,425.8" fill="#c9fbc9" fill-opacity="0.95"/><polygon points="368.0,398.0 353.0,436.0 370.5,434.0" fill="#b2f7b2" fill-opacity="0.95"/><polygon points="368.0,398.0 370.5,434.0 388.0,432.0" fill="#d6fdd6" fill-opacity="0.95"/><line x1="368.8" y1="383.8" x2="323.8" y2="395.0" stroke="#b9f8b9" stroke-width="5.6"/><line x1="368.8" y1="382.8" x2="323.8" y2="394.0" stroke="#eafeea" stroke-width="2.4"/><ellipse cx="323.8" cy="395.0" rx="4" ry="8" fill="#aef5ae" transform="rotate(166.0 323.8 395.0)"/><clipPath id="tc2"><circle cx="368.8" cy="383.8" r="18.5"/></clipPath><circle cx="368.8" cy="383.8" r="18.5" fill="url(#gtar)"/><g clip-path="url(#tc2)"><rect x="363.6" y="361.6" width="17.0" height="44.4" fill="url(#gband)" transform="rotate(-26 368.8 383.8)"/></g>
<polygon points="455.0,415.0 454.0,449.5 472.7,441.9" fill="#c9fbc9" fill-opacity="0.95"/><polygon points="455.0,415.0 437.0,451.0 454.0,449.5" fill="#b2f7b2" fill-opacity="0.95"/><polygon points="455.0,415.0 454.0,449.5 471.0,448.0" fill="#d6fdd6" fill-opacity="0.95"/><line x1="455.0" y1="401.0" x2="412.5" y2="413.8" stroke="#b9f8b9" stroke-width="5.6"/><line x1="455.0" y1="400.0" x2="412.5" y2="412.8" stroke="#eafeea" stroke-width="2.4"/><ellipse cx="412.5" cy="413.8" rx="4" ry="8" fill="#aef5ae" transform="rotate(163.3 412.5 413.8)"/><clipPath id="tc3"><circle cx="455.0" cy="401.0" r="18.5"/></clipPath><circle cx="455.0" cy="401.0" r="18.5" fill="url(#gtar)"/><g clip-path="url(#tc3)"><rect x="449.8" y="378.8" width="17.0" height="44.4" fill="url(#gband)" transform="rotate(-26 455.0 401.0)"/></g>
<polygon points="520.0,412.0 508.0,442.0 523.4,440.4" fill="#c9fbc9" fill-opacity="0.95"/><polygon points="520.0,412.0 494.0,438.0 508.0,442.0" fill="#b2f7b2" fill-opacity="0.95"/><polygon points="520.0,412.0 508.0,442.0 522.0,446.0" fill="#d6fdd6" fill-opacity="0.95"/><line x1="521.0" y1="400.0" x2="478.8" y2="412.5" stroke="#b9f8b9" stroke-width="5.6"/><line x1="521.0" y1="399.0" x2="478.8" y2="411.5" stroke="#eafeea" stroke-width="2.4"/><ellipse cx="478.8" cy="412.5" rx="4" ry="8" fill="#aef5ae" transform="rotate(163.5 478.8 412.5)"/><clipPath id="tc4"><circle cx="521.0" cy="400.0" r="18.5"/></clipPath><circle cx="521.0" cy="400.0" r="18.5" fill="url(#gtar)"/><g clip-path="url(#tc4)"><rect x="515.8" y="377.8" width="17.0" height="44.4" fill="url(#gband)" transform="rotate(-26 521.0 400.0)"/></g>
<polygon points="578.0,412.0 559.0,429.0 571.1,432.9" fill="#c9fbc9" fill-opacity="0.95"/><polygon points="578.0,412.0 548.0,420.0 559.0,429.0" fill="#b2f7b2" fill-opacity="0.95"/><polygon points="578.0,412.0 559.0,429.0 570.0,438.0" fill="#d6fdd6" fill-opacity="0.95"/><line x1="583.8" y1="403.5" x2="542.5" y2="415.5" stroke="#b9f8b9" stroke-width="5.6"/><line x1="583.8" y1="402.5" x2="542.5" y2="414.5" stroke="#eafeea" stroke-width="2.4"/><ellipse cx="542.5" cy="415.5" rx="4" ry="8" fill="#aef5ae" transform="rotate(163.8 542.5 415.5)"/><clipPath id="tc5"><circle cx="583.8" cy="403.5" r="18.5"/></clipPath><circle cx="583.8" cy="403.5" r="18.5" fill="url(#gtar)"/><g clip-path="url(#tc5)"><rect x="578.6" y="381.3" width="17.0" height="44.4" fill="url(#gband)" transform="rotate(-26 583.8 403.5)"/></g>
<polygon points="636.0,415.0 608.0,408.0 605.8,410.8" fill="#c9fbc9" fill-opacity="0.95"/><polygon points="636.0,415.0 610.0,400.0 608.0,408.0" fill="#b2f7b2" fill-opacity="0.95"/><polygon points="636.0,415.0 608.0,408.0 606.0,416.0" fill="#d6fdd6" fill-opacity="0.95"/><line x1="643.8" y1="412.5" x2="605.0" y2="425.0" stroke="#b9f8b9" stroke-width="5.6"/><line x1="643.8" y1="411.5" x2="605.0" y2="424.0" stroke="#eafeea" stroke-width="2.4"/><ellipse cx="605.0" cy="425.0" rx="4" ry="8" fill="#aef5ae" transform="rotate(162.1 605.0 425.0)"/><clipPath id="tc6"><circle cx="643.8" cy="412.5" r="18.5"/></clipPath><circle cx="643.8" cy="412.5" r="18.5" fill="url(#gtar)"/><g clip-path="url(#tc6)"><rect x="638.6" y="390.3" width="17.0" height="44.4" fill="url(#gband)" transform="rotate(-26 643.8 412.5)"/></g>
<polygon points="690.0,432.0 663.0,421.0 661.9,427.1" fill="#c9fbc9" fill-opacity="0.95"/><polygon points="690.0,432.0 664.0,410.0 663.0,421.0" fill="#b2f7b2" fill-opacity="0.95"/><polygon points="690.0,432.0 663.0,421.0 662.0,432.0" fill="#d6fdd6" fill-opacity="0.95"/><line x1="698.8" y1="430.0" x2="660.0" y2="441.0" stroke="#b9f8b9" stroke-width="5.6"/><line x1="698.8" y1="429.0" x2="660.0" y2="440.0" stroke="#eafeea" stroke-width="2.4"/><ellipse cx="660.0" cy="441.0" rx="4" ry="8" fill="#aef5ae" transform="rotate(164.2 660.0 441.0)"/><clipPath id="tc7"><circle cx="698.8" cy="430.0" r="18.5"/></clipPath><circle cx="698.8" cy="430.0" r="18.5" fill="url(#gtar)"/><g clip-path="url(#tc7)"><rect x="693.6" y="407.8" width="17.0" height="44.4" fill="url(#gband)" transform="rotate(-26 698.8 430.0)"/></g>
<polygon points="812.0,418.0 790.0,434.0 795.5,443.4" fill="#c9fbc9" fill-opacity="0.95"/><polygon points="812.0,418.0 785.0,420.0 790.0,434.0" fill="#b2f7b2" fill-opacity="0.95"/><polygon points="812.0,418.0 790.0,434.0 795.0,448.0" fill="#d6fdd6" fill-opacity="0.95"/><clipPath id="tc8"><circle cx="822.5" cy="417.5" r="18.5"/></clipPath><circle cx="822.5" cy="417.5" r="18.5" fill="url(#gtar)"/><g clip-path="url(#tc8)"><rect x="817.3" y="395.3" width="17.0" height="44.4" fill="url(#gband)" transform="rotate(-26 822.5 417.5)"/></g>
<polygon points="765.0,486.0 738.5,462.0 731.4,467.0" fill="#c9fbc9" fill-opacity="0.95"/><polygon points="765.0,486.0 745.0,452.0 738.5,462.0" fill="#b2f7b2" fill-opacity="0.95"/><polygon points="765.0,486.0 738.5,462.0 732.0,472.0" fill="#d6fdd6" fill-opacity="0.95"/><line x1="773.8" y1="486.0" x2="737.5" y2="497.5" stroke="#b9f8b9" stroke-width="5.6"/><line x1="773.8" y1="485.0" x2="737.5" y2="496.5" stroke="#eafeea" stroke-width="2.4"/><ellipse cx="737.5" cy="497.5" rx="4" ry="8" fill="#aef5ae" transform="rotate(162.4 737.5 497.5)"/><clipPath id="tc9"><circle cx="773.8" cy="486.0" r="18.5"/></clipPath><circle cx="773.8" cy="486.0" r="18.5" fill="url(#gtar)"/><g clip-path="url(#tc9)"><rect x="768.6" y="463.8" width="17.0" height="44.4" fill="url(#gband)" transform="rotate(-26 773.8 486.0)"/></g>
<line x1="628.0" y1="510.0" x2="609.4" y2="490.9" stroke="#ee0000" stroke-width="5.5"/><polygon points="597.5,478.8 615.1,485.3 603.6,496.5" fill="#ee0000" /><polygon points="597.5,478.8 609.4,490.9 603.6,496.5" fill="#b00000" /><line x1="641.0" y1="478.0" x2="641.0" y2="465.0" stroke="#0000ee" stroke-width="6"/><polygon points="641.0,447.0 648.5,465.0 633.5,465.0" fill="#0000ee" /><polygon points="641.0,447.0 641.0,465.0 633.5,465.0" fill="#0000a8" /><line x1="638" y1="553" x2="598" y2="515" stroke="#ee0000" stroke-width="5.5"/><line x1="640.0" y1="552.0" x2="594.5" y2="568.3" stroke="#00ee00" stroke-width="4.5"/><polygon points="570.0,577.0 591.6,560.3 597.3,576.3" fill="#00ee00" /><polygon points="570.0,577.0 594.5,568.3 597.3,576.3" fill="#00b400" /><line x1="637.5" y1="554" x2="637.5" y2="527" stroke="#0000ee" stroke-width="5.5"/><line x1="637.5" y1="553" x2="688" y2="536" stroke="#0000ee" stroke-width="5.5"/><polygon points="678.0,531.0 705.0,531.0 686.0,541.0" fill="#0000ee" /><line x1="626.0" y1="522.5" x2="593.0" y2="532.2" stroke="#00ee00" stroke-width="4.5"/><polygon points="570.0,539.0 590.8,524.5 595.3,539.9" fill="#00ee00" /><polygon points="570.0,539.0 593.0,532.2 595.3,539.9" fill="#00b400" /><line x1="837.0" y1="612.0" x2="841.0" y2="562.9" stroke="#00ee00" stroke-width="5"/><polygon points="842.5,545.0 849.5,563.6 832.6,562.2" fill="#00ee00" /><polygon points="842.5,545.0 841.0,562.9 832.6,562.2" fill="#00b400" /><line x1="880.0" y1="646.0" x2="915.8" y2="631.2" stroke="#ee0000" stroke-width="6.5"/><polygon points="938.0,622.0 918.3,637.2 913.3,625.2" fill="#ee0000" /><polygon points="938.0,622.0 915.8,631.2 913.3,625.2" fill="#b00000" /><line x1="870.5" y1="650.4" x2="913.7" y2="686.3" stroke="#00ee00" stroke-width="5.5"/><polygon points="929.8,699.7 908.2,692.8 919.1,679.7" fill="#00ee00" /><polygon points="929.8,699.7 913.7,686.3 919.1,679.7" fill="#00b400" /><line x1="869.5" y1="652.0" x2="864.5" y2="696.1" stroke="#0000ee" stroke-width="6.5"/><polygon points="862.2,717.0 856.6,695.2 872.5,697.0" fill="#0000ee" /><polygon points="862.2,717.0 864.5,696.1 872.5,697.0" fill="#0000a8" />
</svg>
<span class="t" style="left:643px;top:494px;font-size:15px;letter-spacing:0px">UR20 Base</span>
<span class="t" style="left:539px;top:509px;font-size:15px;letter-spacing:0.1px">Reference Rhino</span>
<span class="t" style="left:642px;top:531px;font-size:15px;letter-spacing:0px">My Mechanism Base</span>
<span class="t" style="left:875px;top:627px;font-size:15px;letter-spacing:0px">ScannerModele</span>
</div>
<svg width="0" height="0" style="position:absolute"><defs><linearGradient id="gsimb" x1="0" y1="0" x2="1" y2="1"><stop offset="0" stop-color="#a8d0f8"/><stop offset="1" stop-color="#2f7be0"/></linearGradient><linearGradient id="gfun" x1="0" y1="0" x2="1" y2="0"><stop offset="0" stop-color="#555"/><stop offset="0.35" stop-color="#fafafa"/><stop offset="0.7" stop-color="#aaa"/><stop offset="1" stop-color="#444"/></linearGradient></defs></svg>
<div class="b" style="left:31px;top:58px;width:1px;height:81px;background:#3a3a3a"></div>
<div class="b" style="left:31px;top:99px;width:10px;height:1px;background:#3a3a3a"></div>
<div class="b" style="left:31px;top:126px;width:10px;height:1px;background:#3a3a3a"></div>
<div class="b" style="left:51px;top:58px;width:1px;height:14px;background:#3a3a3a"></div>
<div class="b" style="left:51px;top:71px;width:10px;height:1px;background:#3a3a3a"></div>
<div class="b" style="left:31px;top:166px;width:1px;height:149px;background:#3a3a3a"></div>
<div class="b" style="left:31px;top:288px;width:10px;height:1px;background:#3a3a3a"></div>
<div class="b" style="left:31px;top:314px;width:10px;height:1px;background:#3a3a3a"></div>
<div class="b" style="left:111px;top:247px;width:1px;height:14px;background:#3a3a3a"></div>
<div class="b" style="left:111px;top:260px;width:10px;height:1px;background:#3a3a3a"></div>
<svg class="b" style="left:3.4px;top:14.0px;" width="16" height="10" viewBox="0 0 16 10"><path d="M0.3 0.3 L15.3 0.3 L7.8 9.6 Z" fill="#000"/></svg>
<svg class="b" style="left:27px;top:5px;" width="24" height="24" viewBox="0 0 24 24"><path d="M10.5 2.5 L18 0.8 L18.6 21 L11.5 22.8 Z" fill="url(#gsimb)"/><path d="M4.5 3 L11 2 L11.5 22.6 L3.8 22.4 L3.5 15 L5 14 Z" fill="#f6f6f6"/><path d="M3.5 15 L5 14 L11.2 14 L11.5 22.6 L3.8 22.4 Z" fill="#e6e6e6"/></svg>
<span class="t" id="tr0" style="left:53.5px;top:11px;font-size:15px;letter-spacing:0.415px;">Simulation</span>
<svg class="b" style="left:23.3px;top:41.0px;" width="16" height="10" viewBox="0 0 16 10"><path d="M0.3 0.3 L15.3 0.3 L7.8 9.6 Z" fill="#000"/></svg>
<svg class="b" style="left:44px;top:33px;" width="24" height="24" viewBox="0 0 16 16"><circle cx="4.4" cy="5.2" r="3.7" fill="url(#gsph)"/><path d="M10.6 10.8 L1.5 12.8" stroke="#e8334a" stroke-width="1.3" fill="none"/><path d="M0.4 13 L3.2 11.6 L3.4 13.2 Z" fill="#e8334a"/><path d="M10.6 10.8 L14.6 14.6" stroke="#2fae7a" stroke-width="1.3" fill="none"/><path d="M15.6 15.6 L13.2 14.6 L14.6 13.2 Z" fill="#2fae7a"/><path d="M10.6 10.8 L10.6 2.5" stroke="#3333ee" stroke-width="1.3" fill="none"/><path d="M10.6 0 L9.4 3.2 L11.8 3.2 Z" fill="#3333ee"/></svg>
<span class="t" id="tr1" style="left:73.8px;top:38px;font-size:15px;letter-spacing:0.021px;">Reference Rhino</span>
<svg class="b" style="left:64px;top:60px;" width="24" height="24" viewBox="0 0 24 24"><path d="M0.8 7.7 L11.2 0.9 L22.8 4.3 L21.7 16.5 L12.6 22.6 L1.1 18.6 Z" fill="url(#gcubeb)" stroke="#1e1e1e" stroke-width="1.3" stroke-linejoin="round"/><path d="M1.4 8 L11.6 11.2 L22.2 4.8 M11.6 11.2 L12.4 22" fill="none" stroke="#ffffff" stroke-opacity="0.6" stroke-width="1"/></svg>
<span class="t" id="tr2" style="left:93.8px;top:65px;font-size:15px;letter-spacing:0.184px;">RhinoCrv</span>
<svg class="b" style="left:44px;top:87px;" width="24" height="24" viewBox="0 0 24 24"><path d="M0.8 7.7 L11.2 0.9 L22.8 4.3 L21.7 16.5 L12.6 22.6 L1.1 18.6 Z" fill="url(#gcubeg)" stroke="#1e1e1e" stroke-width="1.3" stroke-linejoin="round"/><path d="M1.4 8 L11.6 11.2 L22.2 4.8 M11.6 11.2 L12.4 22" fill="none" stroke="#ffffff" stroke-opacity="0.6" stroke-width="1"/></svg>
<span class="t" id="tr3" style="left:73.8px;top:92px;font-size:15px;letter-spacing:0.330px;">Environnement</span>
<svg class="b" style="left:44px;top:114px;" width="24" height="24" viewBox="0 0 24 24"><path d="M0.8 7.7 L11.2 0.9 L22.8 4.3 L21.7 16.5 L12.6 22.6 L1.1 18.6 Z" fill="url(#gcubeg)" stroke="#1e1e1e" stroke-width="1.3" stroke-linejoin="round"/><path d="M1.4 8 L11.6 11.2 L22.2 4.8 M11.6 11.2 L12.4 22" fill="none" stroke="#ffffff" stroke-opacity="0.6" stroke-width="1"/></svg>
<span class="t" id="tr4" style="left:73.8px;top:119px;font-size:15px;letter-spacing:-0.318px;">Réhausse</span>
<svg class="b" style="left:23.3px;top:149.0px;" width="16" height="10" viewBox="0 0 16 10"><path d="M0.3 0.3 L15.3 0.3 L7.8 9.6 Z" fill="#000"/></svg>
<svg class="b" style="left:44px;top:141px;" width="24" height="24" viewBox="0 0 16 16"><path d="M10.6 10.8 L1.5 12.8" stroke="#e8334a" stroke-width="1.3" fill="none"/><path d="M0.4 13 L3.2 11.6 L3.4 13.2 Z" fill="#e8334a"/><path d="M10.6 10.8 L14.6 14.6" stroke="#2fae7a" stroke-width="1.3" fill="none"/><path d="M15.6 15.6 L13.2 14.6 L14.6 13.2 Z" fill="#2fae7a"/><path d="M10.6 10.8 L10.6 2.5" stroke="#3333ee" stroke-width="1.3" fill="none"/><path d="M10.6 0 L9.4 3.2 L11.8 3.2 Z" fill="#3333ee"/></svg>
<span class="t" id="tr5" style="left:73.8px;top:146px;font-size:15px;letter-spacing:0.105px;">My Mechanism Base</span>
<svg class="b" style="left:43.3px;top:176.0px;" width="16" height="10" viewBox="0 0 16 10"><path d="M0.3 0.3 L15.3 0.3 L7.8 9.6 Z" fill="#000"/></svg>
<svg class="b" style="left:64px;top:168px;" width="24" height="24" viewBox="0 0 24 24"><path d="M15.3 6.7 L15.3 8.3 L13.7 8.7 L13.2 9.9 L14.2 11.2 L13.1 12.5 L11.7 11.7 L10.6 12.4 L10.5 14.0 L8.9 14.3 L8.2 12.8 L7.0 12.6 L5.8 13.8 L4.4 12.9 L4.9 11.4 L4.1 10.4 L2.4 10.6 L1.9 9.0 L3.2 8.1 L3.2 6.9 L1.9 6.0 L2.4 4.4 L4.1 4.6 L4.9 3.6 L4.4 2.1 L5.8 1.2 L7.0 2.4 L8.2 2.2 L8.9 0.7 L10.5 1.0 L10.6 2.6 L11.7 3.3 L13.1 2.5 L14.2 3.8 L13.2 5.1 L13.7 6.3 Z" fill="#d9d35a" stroke="#8f8a20" stroke-width="0.6"/><circle cx="8.5" cy="7.5" r="1.9" fill="#8f8a20"/><path d="M23.4 14.2 L23.4 15.8 L21.8 16.2 L21.4 17.5 L22.4 18.8 L21.3 20.1 L19.8 19.4 L18.6 20.0 L18.5 21.7 L16.9 22.0 L16.2 20.5 L14.9 20.2 L13.8 21.4 L12.3 20.6 L12.8 19.0 L11.9 18.0 L10.3 18.2 L9.7 16.6 L11.1 15.7 L11.1 14.3 L9.7 13.4 L10.3 11.8 L11.9 12.0 L12.8 11.0 L12.3 9.4 L13.8 8.6 L14.9 9.8 L16.2 9.5 L16.9 8.0 L18.5 8.3 L18.6 10.0 L19.8 10.6 L21.3 9.9 L22.4 11.2 L21.4 12.5 L21.8 13.8 Z" fill="#d9d35a" stroke="#8f8a20" stroke-width="0.6"/><circle cx="16.5" cy="15" r="2.0" fill="#8f8a20"/><circle cx="6" cy="18.5" r="5.2" fill="#111"/><g transform="rotate(-40 6 18.5)" fill="none" stroke="#fff" stroke-width="1.1"><rect x="2.2" y="17" width="4.4" height="3" rx="1.5"/><rect x="5.4" y="17" width="4.4" height="3" rx="1.5"/></g></svg>
<span class="t" id="tr6" style="left:93.8px;top:173px;font-size:15px;letter-spacing:0.303px;">My Mechanism</span>
<svg class="b" style="left:63.3px;top:203.0px;" width="16" height="10" viewBox="0 0 16 10"><path d="M0.3 0.3 L15.3 0.3 L7.8 9.6 Z" fill="#000"/></svg>
<svg class="b" style="left:84px;top:195px;" width="24" height="24" viewBox="0 0 16 16"><path d="M10.6 10.8 L1.5 12.8" stroke="#e8334a" stroke-width="1.3" fill="none"/><path d="M0.4 13 L3.2 11.6 L3.4 13.2 Z" fill="#e8334a"/><path d="M10.6 10.8 L14.6 14.6" stroke="#2fae7a" stroke-width="1.3" fill="none"/><path d="M15.6 15.6 L13.2 14.6 L14.6 13.2 Z" fill="#2fae7a"/><path d="M10.6 10.8 L10.6 2.5" stroke="#3333ee" stroke-width="1.3" fill="none"/><path d="M10.6 0 L9.4 3.2 L11.8 3.2 Z" fill="#3333ee"/></svg>
<span class="t" id="tr7" style="left:113.8px;top:200px;font-size:15px;letter-spacing:-0.280px;">UR20 Base</span>
<svg class="b" style="left:83.3px;top:230.0px;" width="16" height="10" viewBox="0 0 16 10"><path d="M0.3 0.3 L15.3 0.3 L7.8 9.6 Z" fill="#000"/></svg>
<svg class="b" style="left:104px;top:222px;" width="24" height="24" viewBox="0 0 16 16"><ellipse cx="10" cy="13.4" rx="4.8" ry="2.1" fill="#1a1a1a"/><path d="M7.6 12.2 L8.6 8.6 L12.8 9 L13.4 12 L11 13 Z" fill="#d0602a"/><path d="M8.6 9.6 L10.4 3 L12.6 3.6 L10.8 10.2 Z" fill="#d86a30"/><path d="M3.2 2.2 L6 1.6 L13.6 1.4 L14.6 3.2 L13 4.8 L10.6 4.2 L5 4.2 L3 3.6 Z" fill="#c9581f"/><path d="M12.6 1.6 L14.6 3.2 L13 4.8 L12 3.4 Z" fill="#3a2a20"/><circle cx="3.8" cy="12" r="3.6" fill="#111"/><g transform="rotate(-40 3.8 12)" fill="none" stroke="#fff" stroke-width="0.8"><rect x="1.2" y="11" width="3" height="2" rx="1"/><rect x="3.4" y="11" width="3" height="2" rx="1"/></g></svg>
<span class="t" id="tr8" style="left:133.8px;top:227px;font-size:15px;letter-spacing:-0.090px;">UR20</span>
<svg class="b" style="left:124px;top:249px;" width="24" height="24" viewBox="0 0 16 16"><path d="M2 1.6 L5.4 0.6 L8.4 3.2 L12.8 5.4 L15.6 11 L13.6 10.6 L11.2 7.4 L8.6 6.4 L10 9.6 L12.2 14.8 L10.2 14.2 L6.8 10.6 L4 10.6 L2 8 L1.4 4 Z" fill="#8c8a2c" stroke="#5f5e14" stroke-width="0.6"/><path d="M7.4 4 L11.8 6.2 L13.6 9.6 M6 8.4 L9.2 11 L10.8 13.8" stroke="#b5b34a" stroke-width="0.7" fill="none"/><circle cx="4.4" cy="6.2" r="3.7" fill="url(#gsph)"/></svg>
<span class="t" id="tr9" style="left:153.8px;top:254px;font-size:15px;letter-spacing:0.057px;">ScannerMo...</span>
<svg class="b" style="left:44px;top:276px;" width="24" height="24" viewBox="0 0 24 24"><path d="M0.5 1.5 L22.5 1.5" stroke="#222" stroke-width="1.6"/><path d="M3.5 2.5 L19.5 2.5 L14.2 11 L14.2 22.5 L9.8 22.5 L9.8 11 Z" fill="url(#gfun)" stroke="#2a2a2a" stroke-width="0.9"/><ellipse cx="11.5" cy="4.2" rx="6.5" ry="1.6" fill="#f4f4f4"/><circle cx="16.6" cy="17" r="6" fill="#e8121c"/><circle cx="16.6" cy="17" r="6" fill="none" stroke="#ff6a6a" stroke-width="0.6"/><path d="M14.2 14.6 L19 19.4 M19 14.6 L14.2 19.4" stroke="#fff" stroke-width="1.9" stroke-linecap="round"/></svg>
<span class="t" id="tr10" style="left:73.8px;top:281px;font-size:15px;letter-spacing:0.171px;">RhinoCrv Settings</span>
<svg class="b" style="left:44px;top:303px;" width="24" height="24" viewBox="0 0 24 24"><path d="M3.2 1.5 H14.5 L19.4 6.2 V22.8 H3.2 Z" fill="#f7f7f7" stroke="#555" stroke-width="0.9"/><path d="M14.5 1.5 V6.2 H19.4" fill="#ddd" stroke="#555" stroke-width="0.8"/><path d="M5.5 8 H16.5" stroke="#6e6e6e" stroke-width="0.9"/><path d="M5.5 10 H16.5" stroke="#6e6e6e" stroke-width="0.9"/><path d="M5.5 12 H16.5" stroke="#6e6e6e" stroke-width="0.9"/><path d="M5.5 14 H16.5" stroke="#6e6e6e" stroke-width="0.9"/><path d="M5.5 16 H16.5" stroke="#6e6e6e" stroke-width="0.9"/><path d="M5.5 18 H16.5" stroke="#6e6e6e" stroke-width="0.9"/><path d="M5.5 20 H16.5" stroke="#6e6e6e" stroke-width="0.9"/></svg>
<span class="t" id="tr11" style="left:73.8px;top:308px;font-size:15px;letter-spacing:0.184px;">RhinoCrv</span>
<div class="b" style="left:1120px;top:0px;width:1px;height:893px;background:#828790;"></div>
<div class="b" style="left:1121px;top:0px;width:794px;height:893px;background:#f0f0f0;"></div>
<div class="b" style="left:1915px;top:0px;width:4px;height:931px;background:#fff;"></div>
<div class="b" style="left:1915px;top:0px;width:4px;height:40px;background:#00304f;"></div>
<div class="b" style="left:1915px;top:40px;width:4px;height:1px;background:#1e90ff;"></div>
<div class="b" style="left:1915px;top:835px;width:4px;height:1px;background:#1e90ff;"></div>
<div class="b" style="left:1915px;top:836px;width:4px;height:95px;background:#00304f;"></div>
<div class="b" style="left:1125px;top:0px;width:790px;height:17px;background:#d9d9d9;border-bottom:1px solid #c2c2c2;"></div>
<span class="t" id="u1" style="top:5px;left:1130px;letter-spacing:0.263px;">Projet Suivi de Courbes : RhinoCrv Settings</span>
<svg class="b" style="left:1878px;top:4px;" width="10" height="10" viewBox="0 0 10 10"><path d="M2.5 2.5 V0.5 H9.5 V6.5 H7.5" fill="none" stroke="#111" stroke-width="1"/><rect x="0.5" y="3.5" width="6" height="6" fill="none" stroke="#111" stroke-width="1"/><path d="M0.5 4.5 H6.5" stroke="#111" stroke-width="1"/></svg>
<svg class="b" style="left:1899px;top:5px;" width="9" height="9" viewBox="0 0 9 9"><path d="M0.8 0.8 L8.2 8.2 M8.2 0.8 L0.8 8.2" stroke="#111" stroke-width="1.7" fill="none"/></svg>
<span class="t" id="u2" style="top:36px;left:1136px;letter-spacing:0.076px;">Robot :</span>
<span class="t" id="u3" style="top:59px;left:1136px;letter-spacing:-0.088px;">Repère :</span>
<span class="t" id="u4" style="top:82px;left:1136px;letter-spacing:0.038px;">Outil :</span>
<span class="t" id="u5" style="top:100px;left:1136px;letter-spacing:0.156px;">Objet :</span>
<span class="t" id="u6" style="top:114px;left:1136px;letter-spacing:-0.280px;">Programme :</span>
<span class="t" id="u7" style="top:100px;left:1276.5px;letter-spacing:-0.295px;">RhinoCrv</span>
<span class="t" id="u8" style="top:114px;left:1276.5px;letter-spacing:-0.295px;">RhinoCrv</span>
<div class="cmb" style="left:1277px;top:29px;width:139px;height:22px;"></div><svg class="b" style="left:1400px;top:37.5px" width="10" height="6" viewBox="0 0 10 6"><path d="M0.5 0.8 L5 5.2 L9.5 0.8" fill="none" stroke="#333" stroke-width="1.1"/></svg><svg class="b" style="left:1281px;top:32px;" width="16" height="16" viewBox="0 0 16 16"><ellipse cx="10" cy="13.4" rx="4.8" ry="2.1" fill="#1a1a1a"/><path d="M7.6 12.2 L8.6 8.6 L12.8 9 L13.4 12 L11 13 Z" fill="#d0602a"/><path d="M8.6 9.6 L10.4 3 L12.6 3.6 L10.8 10.2 Z" fill="#d86a30"/><path d="M3.2 2.2 L6 1.6 L13.6 1.4 L14.6 3.2 L13 4.8 L10.6 4.2 L5 4.2 L3 3.6 Z" fill="#c9581f"/><path d="M12.6 1.6 L14.6 3.2 L13 4.8 L12 3.4 Z" fill="#3a2a20"/><circle cx="3.8" cy="12" r="3.6" fill="#111"/><g transform="rotate(-40 3.8 12)" fill="none" stroke="#fff" stroke-width="0.8"><rect x="1.2" y="11" width="3" height="2" rx="1"/><rect x="3.4" y="11" width="3" height="2" rx="1"/></g></svg><span class="t" id="u9" style="top:36px;left:1300px;letter-spacing:-0.531px;">UR20</span>
<div class="cmb" style="left:1277px;top:52px;width:139px;height:22px;"></div><svg class="b" style="left:1400px;top:60.5px" width="10" height="6" viewBox="0 0 10 6"><path d="M0.5 0.8 L5 5.2 L9.5 0.8" fill="none" stroke="#333" stroke-width="1.1"/></svg><svg class="b" style="left:1281px;top:55px;" width="16" height="16" viewBox="0 0 16 16"><circle cx="4.4" cy="5.2" r="3.7" fill="url(#gsph)"/><path d="M10.6 10.8 L1.5 12.8" stroke="#e8334a" stroke-width="1.3" fill="none"/><path d="M0.4 13 L3.2 11.6 L3.4 13.2 Z" fill="#e8334a"/><path d="M10.6 10.8 L14.6 14.6" stroke="#2fae7a" stroke-width="1.3" fill="none"/><path d="M15.6 15.6 L13.2 14.6 L14.6 13.2 Z" fill="#2fae7a"/><path d="M10.6 10.8 L10.6 2.5" stroke="#3333ee" stroke-width="1.3" fill="none"/><path d="M10.6 0 L9.4 3.2 L11.8 3.2 Z" fill="#3333ee"/></svg><span class="t" id="u10" style="top:59px;left:1300px;letter-spacing:-0.171px;">Reference Rhino</span>
<div class="cmb" style="left:1277px;top:75px;width:139px;height:22px;"></div><svg class="b" style="left:1400px;top:83.5px" width="10" height="6" viewBox="0 0 10 6"><path d="M0.5 0.8 L5 5.2 L9.5 0.8" fill="none" stroke="#333" stroke-width="1.1"/></svg><svg class="b" style="left:1281px;top:78px;" width="16" height="16" viewBox="0 0 16 16"><path d="M2 1.6 L5.4 0.6 L8.4 3.2 L12.8 5.4 L15.6 11 L13.6 10.6 L11.2 7.4 L8.6 6.4 L10 9.6 L12.2 14.8 L10.2 14.2 L6.8 10.6 L4 10.6 L2 8 L1.4 4 Z" fill="#8c8a2c" stroke="#5f5e14" stroke-width="0.6"/><path d="M7.4 4 L11.8 6.2 L13.6 9.6 M6 8.4 L9.2 11 L10.8 13.8" stroke="#b5b34a" stroke-width="0.7" fill="none"/><circle cx="4.4" cy="6.2" r="3.7" fill="url(#gsph)"/></svg><span class="t" id="u11" style="top:82px;left:1300px;letter-spacing:-0.312px;">ScannerModele</span>
<div class="chk" style="left:1137px;top:168px"><svg width="11" height="11" viewBox="0 0 11 11" style="position:absolute;left:0;top:0"><path d="M1.5 5.5 L4.2 8.3 L9.6 2.3" fill="none" stroke="#222" stroke-width="1.3"/></svg></div>
<span class="t" id="u12" style="top:170px;left:1154px;letter-spacing:-0.171px;">Parcours d'outil visible</span>
<div class="btn" style="left:1278px;top:164px;width:137px;height:22px;"></div>
<svg class="b" style="left:1306px;top:169px;" width="12" height="10" viewBox="0 0 12 10"><rect x="0" y="0" width="12" height="2.50" rx="0.8" fill="#000"/><rect x="0" y="3.75" width="12" height="2.50" rx="0.8" fill="#000"/><rect x="0" y="7.50" width="12" height="2.50" rx="0.8" fill="#000"/></svg>
<span class="t" id="u13" style="top:171px;left:1321px;letter-spacing:-0.190px;">Plus d'options</span>
<div class="grp" style="left:1137px;top:194px;width:279px;height:88px;"></div><div class="b" style="left:1142px;top:192px;width:48.5px;height:5px;background:#f0f0f0"></div><span class="t" id="u14" style="top:190px;left:1145px;letter-spacing:-0.191px;">Parcours</span>
<div class="cmb" style="left:1143px;top:209px;width:134px;height:20px;"></div><svg class="b" style="left:1261px;top:216.5px" width="10" height="6" viewBox="0 0 10 6"><path d="M0.5 0.8 L5 5.2 L9.5 0.8" fill="none" stroke="#333" stroke-width="1.1"/></svg><span class="t" id="u15" style="top:215px;left:1146.5px;letter-spacing:-0.167px;">Sélectionner courbes</span>
<div class="btn" style="left:1283px;top:208px;width:126px;height:22px;"></div><span class="t" id="u16" style="top:215px;left:1283px;width:126px;text-align:center;letter-spacing:-0.167px;">Sélectionner courbes</span>
<span class="t" id="u17" style="top:238px;left:1142.5px;letter-spacing:-0.094px;">Points du parcours : 1259</span>
<div class="btn" style="left:1144px;top:255px;width:265px;height:21px;"></div><span class="t" id="u18" style="top:261px;left:1144px;width:265px;text-align:center;letter-spacing:-0.259px;">Événements du Programme</span>
<div class="chk" style="left:1644px;top:34px"><svg width="11" height="11" viewBox="0 0 11 11" style="position:absolute;left:0;top:0"><path d="M1.5 5.5 L4.2 8.3 L9.6 2.3" fill="none" stroke="#222" stroke-width="1.3"/></svg></div>
<span class="t" id="u19" style="top:36px;left:1662px;letter-spacing:-0.080px;">Approche/Retrait chaque courbe</span>
<span class="t" id="u20" style="top:56px;left:1644px;letter-spacing:-0.165px;">Vitesse d'operation (mm/s)</span>
<div class="spn" style="left:1817px;top:50px;width:89px;height:20px;background:#fff;"></div><div class="b" style="left:1891px;top:52px;width:13px;height:16px;background:#e9e9e9;border:1px solid #c6c6c6;"></div><div class="b" style="left:1891px;top:60px;width:13px;height:1px;background:#c6c6c6;"></div><svg class="b" style="left:1894.5px;top:55.5px" width="6" height="9" viewBox="0 0 6 9"><path d="M0.3 2.8 L3 0 L5.7 2.8 Z" fill="#000"/><path d="M0.3 6.2 L3 9 L5.7 6.2 Z" fill="#000"/></svg><span class="t" id="u21" style="top:56px;left:1820px;letter-spacing:-0.109px;">50.000</span>
<span class="t" id="u22" style="top:77px;left:1644px;letter-spacing:-0.150px;">Tolérance pour joindre coubes (mm)</span>
<div class="spn" style="left:1817px;top:71px;width:89px;height:20px;background:#fff;"></div><div class="b" style="left:1891px;top:73px;width:13px;height:16px;background:#e9e9e9;border:1px solid #c6c6c6;"></div><div class="b" style="left:1891px;top:81px;width:13px;height:1px;background:#c6c6c6;"></div><svg class="b" style="left:1894.5px;top:76.5px" width="6" height="9" viewBox="0 0 6 9"><path d="M0.3 2.8 L3 0 L5.7 2.8 Z" fill="#000"/><path d="M0.3 6.2 L3 9 L5.7 6.2 Z" fill="#000"/></svg><span class="t" id="u23" style="top:77px;left:1819.5px;letter-spacing:-0.006px;">0.500</span>
<span class="t" id="u24" style="top:100px;left:1646.8px;letter-spacing:-0.199px;">Approche</span>
<div class="btn" style="left:1766px;top:93px;width:26px;height:22px;"></div>
<svg class="b" style="left:1771px;top:96px;" width="16" height="16" viewBox="0 0 16 16"><rect x="0.5" y="0.5" width="9.5" height="11.5" fill="#e9e9e9" stroke="#d3d3d3" stroke-width="0.8"/><path d="M4.5 3.5 H15 V13 L12.5 15.5 H4.5 Z" fill="#f6f6f6" stroke="#cfcfcf" stroke-width="0.8"/><path d="M6.5 6.5 H13 M6.5 8.5 H13 M6.5 10.5 H13" stroke="#d8d8d8" stroke-width="0.9"/><path d="M12.5 15.5 L12.5 13 L15 13 Z" fill="#a8a8a8"/></svg>
<div class="btn" style="left:1796px;top:93px;width:26px;height:22px;"></div>
<svg class="b" style="left:1801px;top:95px;" width="16" height="18" viewBox="0 0 16 18"><path d="M5.5 3.2 Q7.5 -0.4 9.5 3.2 Z" fill="#c8c8c8" stroke="#9a9a9a" stroke-width="0.6"/><rect x="2" y="2.8" width="11" height="12" rx="0.8" fill="#d9a86c" stroke="#c48f4e" stroke-width="0.6"/><path d="M5.2 6.2 H12 L14 8.2 V16.6 H5.2 Z" fill="#fbfbfb" stroke="#e2e2e2" stroke-width="0.5"/></svg>
<div class="btn" style="left:1846px;top:93px;width:26px;height:22px;"></div>
<svg class="b" style="left:1851px;top:96px;" width="16" height="16" viewBox="0 0 16 16"><path d="M6.3 1 H9.7 V6.3 H15 V9.7 H9.7 V15 H6.3 V9.7 H1 V6.3 H6.3 Z" fill="#2a7fd2"/></svg>
<div class="btn" style="left:1876px;top:93px;width:26px;height:22px;"></div>
<svg class="b" style="left:1881px;top:96px;" width="16" height="16" viewBox="0 0 16 16"><rect x="1.2" y="6" width="13.6" height="4" fill="#da434b"/></svg>
<div class="b" style="left:1644px;top:117px;width:262px;height:70px;background:#f0f0f0;border:1px solid #828790;"></div>
<div class="b" style="left:1645px;top:118px;width:260px;height:23px;background:#fff;"></div>
<div class="b" style="left:1763px;top:118px;width:1px;height:23px;background:#e5e5e5;"></div>
<div class="b" style="left:1865px;top:118px;width:1px;height:23px;background:#e5e5e5;"></div>
<span class="t" id="u25" style="top:123px;left:1645px;width:118px;text-align:center;font-size:12px;letter-spacing:-0.504px;">Type</span>
<span class="t" id="u26" style="top:123px;left:1764px;width:101px;text-align:center;font-size:12px;letter-spacing:-0.059px;">Value (mm | deg)</span>
<div class="cmb" style="left:1645px;top:141px;width:118px;height:21px;"></div><svg class="b" style="left:1747px;top:149.0px" width="10" height="6" viewBox="0 0 10 6"><path d="M0.5 0.8 L5 5.2 L9.5 0.8" fill="none" stroke="#333" stroke-width="1.1"/></svg><span class="t" id="u27" style="top:146px;left:1649px;font-size:12px;letter-spacing:0.033px;">Normal (N)</span>
<div class="spn" style="left:1764px;top:141px;width:101px;height:21px;background:#fff;"></div><div class="b" style="left:1850px;top:143px;width:13px;height:17px;background:#e9e9e9;border:1px solid #c6c6c6;"></div><div class="b" style="left:1850px;top:152px;width:13px;height:1px;background:#c6c6c6;"></div><svg class="b" style="left:1853.5px;top:146.5px" width="6" height="10" viewBox="0 0 6 10"><path d="M0.3 2.8 L3 0 L5.7 2.8 Z" fill="#000"/><path d="M0.3 7.2 L3 10 L5.7 7.2 Z" fill="#000"/></svg><span class="t" id="u28" style="top:147px;left:1767px;letter-spacing:-0.109px;">100.000</span>
<span class="t" id="u29" style="top:196px;left:1646.8px;letter-spacing:0.028px;">Rétracter</span>
<div class="btn" style="left:1766px;top:189px;width:26px;height:22px;"></div>
<svg class="b" style="left:1771px;top:192px;" width="16" height="16" viewBox="0 0 16 16"><rect x="0.5" y="0.5" width="9.5" height="11.5" fill="#e9e9e9" stroke="#d3d3d3" stroke-width="0.8"/><path d="M4.5 3.5 H15 V13 L12.5 15.5 H4.5 Z" fill="#f6f6f6" stroke="#cfcfcf" stroke-width="0.8"/><path d="M6.5 6.5 H13 M6.5 8.5 H13 M6.5 10.5 H13" stroke="#d8d8d8" stroke-width="0.9"/><path d="M12.5 15.5 L12.5 13 L15 13 Z" fill="#a8a8a8"/></svg>
<div class="btn" style="left:1796px;top:189px;width:26px;height:22px;"></div>
<svg class="b" style="left:1801px;top:191px;" width="16" height="18" viewBox="0 0 16 18"><path d="M5.5 3.2 Q7.5 -0.4 9.5 3.2 Z" fill="#c8c8c8" stroke="#9a9a9a" stroke-width="0.6"/><rect x="2" y="2.8" width="11" height="12" rx="0.8" fill="#d9a86c" stroke="#c48f4e" stroke-width="0.6"/><path d="M5.2 6.2 H12 L14 8.2 V16.6 H5.2 Z" fill="#fbfbfb" stroke="#e2e2e2" stroke-width="0.5"/></svg>
<div class="btn" style="left:1846px;top:189px;width:26px;height:22px;"></div>
<svg class="b" style="left:1851px;top:192px;" width="16" height="16" viewBox="0 0 16 16"><path d="M6.3 1 H9.7 V6.3 H15 V9.7 H9.7 V15 H6.3 V9.7 H1 V6.3 H6.3 Z" fill="#2a7fd2"/></svg>
<div class="btn" style="left:1876px;top:189px;width:26px;height:22px;"></div>
<svg class="b" style="left:1881px;top:192px;" width="16" height="16" viewBox="0 0 16 16"><rect x="1.2" y="6" width="13.6" height="4" fill="#da434b"/></svg>
<div class="b" style="left:1644px;top:213px;width:262px;height:70px;background:#f0f0f0;border:1px solid #828790;"></div>
<div class="b" style="left:1645px;top:214px;width:260px;height:23px;background:#fff;"></div>
<div class="b" style="left:1763px;top:214px;width:1px;height:23px;background:#e5e5e5;"></div>
<div class="b" style="left:1865px;top:214px;width:1px;height:23px;background:#e5e5e5;"></div>
<span class="t" id="u30" style="top:219px;left:1645px;width:118px;text-align:center;font-size:12px;letter-spacing:-0.504px;">Type</span>
<span class="t" id="u31" style="top:219px;left:1764px;width:101px;text-align:center;font-size:12px;letter-spacing:-0.059px;">Value (mm | deg)</span>
<div class="cmb" style="left:1645px;top:237px;width:118px;height:21px;"></div><svg class="b" style="left:1747px;top:245.0px" width="10" height="6" viewBox="0 0 10 6"><path d="M0.5 0.8 L5 5.2 L9.5 0.8" fill="none" stroke="#333" stroke-width="1.1"/></svg><span class="t" id="u32" style="top:242px;left:1649px;font-size:12px;letter-spacing:0.033px;">Normal (N)</span>
<div class="spn" style="left:1764px;top:237px;width:101px;height:21px;background:#fff;"></div><div class="b" style="left:1850px;top:239px;width:13px;height:17px;background:#e9e9e9;border:1px solid #c6c6c6;"></div><div class="b" style="left:1850px;top:248px;width:13px;height:1px;background:#c6c6c6;"></div><svg class="b" style="left:1853.5px;top:242.5px" width="6" height="10" viewBox="0 0 6 10"><path d="M0.3 2.8 L3 0 L5.7 2.8 Z" fill="#000"/><path d="M0.3 7.2 L3 10 L5.7 7.2 Z" fill="#000"/></svg><span class="t" id="u33" style="top:243px;left:1767px;letter-spacing:-0.109px;">100.000</span>
<span class="t" id="u34" style="top:307px;left:1133.5px;letter-spacing:0.030px;">Offset du parcours :</span>
<div class="cmb" style="left:1235px;top:291px;width:578px;height:20px;"></div><svg class="b" style="left:1797px;top:298.5px" width="10" height="6" viewBox="0 0 10 6"><path d="M0.5 0.8 L5 5.2 L9.5 0.8" fill="none" stroke="#333" stroke-width="1.1"/></svg><span class="t" id="u35" style="top:298px;left:1239px;font-size:10px;font-family:'Liberation Mono',monospace;letter-spacing:-0.049px;">Script (mm,deg) transl(x,y,z)*rotz(rz)*...</span>
<div class="btn" style="left:1817px;top:290px;width:26px;height:22px;"></div>
<svg class="b" style="left:1822px;top:293px;" width="16" height="16" viewBox="0 0 16 16"><rect x="0.5" y="0.5" width="9.5" height="11.5" fill="#e9e9e9" stroke="#d3d3d3" stroke-width="0.8"/><path d="M4.5 3.5 H15 V13 L12.5 15.5 H4.5 Z" fill="#f6f6f6" stroke="#cfcfcf" stroke-width="0.8"/><path d="M6.5 6.5 H13 M6.5 8.5 H13 M6.5 10.5 H13" stroke="#d8d8d8" stroke-width="0.9"/><path d="M12.5 15.5 L12.5 13 L15 13 Z" fill="#a8a8a8"/></svg>
<div class="btn" style="left:1848px;top:290px;width:26px;height:22px;"></div>
<svg class="b" style="left:1853px;top:292px;" width="16" height="18" viewBox="0 0 16 18"><path d="M5.5 3.2 Q7.5 -0.4 9.5 3.2 Z" fill="#c8c8c8" stroke="#9a9a9a" stroke-width="0.6"/><rect x="2" y="2.8" width="11" height="12" rx="0.8" fill="#d9a86c" stroke="#c48f4e" stroke-width="0.6"/><path d="M5.2 6.2 H12 L14 8.2 V16.6 H5.2 Z" fill="#fbfbfb" stroke="#e2e2e2" stroke-width="0.5"/></svg>
<div class="btn" style="left:1879px;top:290px;width:26px;height:22px;"></div>
<svg class="b" style="left:1885px;top:296px;" width="14" height="11" viewBox="0 0 14 11"><rect x="0" y="0" width="14" height="2.75" rx="0.8" fill="#000"/><rect x="0" y="4.12" width="14" height="2.75" rx="0.8" fill="#000"/><rect x="0" y="8.25" width="14" height="2.75" rx="0.8" fill="#000"/></svg>
<div class="b" style="left:1235px;top:314px;width:671px;height:19px;background:#fff;border:1px solid #7a7a7a;"></div>
<span class="t" id="u36" style="top:320px;left:1238px;font-size:10px;font-family:'Liberation Mono',monospace;letter-spacing:-0.002px;">rotZ(0)</span>
<span class="t" id="u37" style="top:344px;left:1133.5px;letter-spacing:-0.138px;">Choisir algorithme :</span>
<div class="cmb" style="left:1229px;top:338px;width:214px;height:20px;"></div><svg class="b" style="left:1427px;top:345.5px" width="10" height="6" viewBox="0 0 10 6"><path d="M0.5 0.8 L5 5.2 L9.5 0.8" fill="none" stroke="#333" stroke-width="1.1"/></svg><span class="t" id="u38" style="top:344px;left:1232.5px;letter-spacing:-0.175px;">Changement d'orientation minimal</span>
<div class="btn" style="left:1447px;top:337px;width:73px;height:21px;"></div><span class="t" id="u39" style="top:343px;left:1447px;width:73px;text-align:center;letter-spacing:-0.283px;">Enseigner</span>
<svg class="b" style="left:1530px;top:340px;" width="16" height="16" viewBox="0 0 16 16"><path d="M6.3 1 H9.7 V6.3 H15 V9.7 H9.7 V15 H6.3 V9.7 H1 V6.3 H6.3 Z" fill="#2a7fd2"/></svg>
<div class="btn" style="left:1746px;top:337px;width:159px;height:22px;"></div>
<div class="b" style="left:1751px;top:342px;width:12px;height:12px;border:1px solid #333;border-radius:6px;background:#fff"></div>
<span class="t" id="u40" style="top:344px;left:1766.5px;letter-spacing:-0.010px;">Montrer le parcours préferé</span>
<div class="grp" style="left:1134px;top:372px;width:458px;height:179px;"></div><div class="b" style="left:1139px;top:370px;width:129.5px;height:5px;background:#f0f0f0"></div><span class="t" id="u41" style="top:368px;left:1142px;letter-spacing:-0.133px;">Paramètres d'optimisation</span>
<div class="btn" style="left:1145px;top:390px;width:73px;height:21px;"></div><span class="t" id="u42" style="top:396px;left:1145px;width:73px;text-align:center;letter-spacing:0.263px;">Défaut</span>
<div class="btn" style="left:1419px;top:390px;width:162px;height:22px;background:#cce4f7;border:1px solid #0078d7;"></div>
<div class="b" style="left:1423px;top:395px;width:13px;height:13px;border-radius:7px;background:radial-gradient(circle at 40% 35%,#9ad04a,#6aa820 70%,#5a951a)"></div>
<span class="t" id="u43" style="top:397px;left:1439px;letter-spacing:-0.084px;">Montrer parcours approximé</span>
<span class="t" id="u44" style="top:476px;left:1143px;letter-spacing:0.058px;">Permettre à l'outil de tourner en Z +/-</span>
<div class="spn" style="left:1331px;top:470px;width:55px;height:20px;background:#fff;"></div><div class="b" style="left:1371px;top:472px;width:13px;height:16px;background:#e9e9e9;border:1px solid #c6c6c6;"></div><div class="b" style="left:1371px;top:480px;width:13px;height:1px;background:#c6c6c6;"></div><svg class="b" style="left:1374.5px;top:475.5px" width="6" height="9" viewBox="0 0 6 9"><path d="M0.3 2.8 L3 0 L5.7 2.8 Z" fill="#000"/><path d="M0.3 6.2 L3 9 L5.7 6.2 Z" fill="#000"/></svg><span class="t" id="u45" style="top:476px;left:1334.5px;letter-spacing:-0.109px;">180.00</span>
<span class="t" id="u46" style="top:476px;left:1391.6px;letter-spacing:-0.081px;">deg par intervalles de</span>
<div class="spn" style="left:1502px;top:470px;width:55px;height:20px;background:#fff;"></div><div class="b" style="left:1542px;top:472px;width:13px;height:16px;background:#e9e9e9;border:1px solid #c6c6c6;"></div><div class="b" style="left:1542px;top:480px;width:13px;height:1px;background:#c6c6c6;"></div><svg class="b" style="left:1545.5px;top:475.5px" width="6" height="9" viewBox="0 0 6 9"><path d="M0.3 2.8 L3 0 L5.7 2.8 Z" fill="#000"/><path d="M0.3 6.2 L3 9 L5.7 6.2 Z" fill="#000"/></svg><span class="t" id="u47" style="top:476px;left:1508.5px;letter-spacing:-0.106px;">20.00</span>
<span class="t" id="u48" style="top:476px;left:1562.4px;letter-spacing:-0.120px;">deg</span>
<div class="grp" style="left:1598px;top:372px;width:147px;height:179px;"></div><div class="b" style="left:1603.5px;top:370px;width:93px;height:5px;background:#f0f0f0"></div><span class="t" id="u49" style="top:368px;left:1606.5px;letter-spacing:-0.141px;">Optimisatin d'axes</span>
<div class="chk" style="left:1602px;top:385px"><svg width="11" height="11" viewBox="0 0 11 11" style="position:absolute;left:0;top:0"><path d="M1.5 5.5 L4.2 8.3 L9.6 2.3" fill="none" stroke="#222" stroke-width="1.3"/></svg></div>
<span class="t" id="u50" style="top:387px;left:1619.7px;letter-spacing:-0.076px;">Optimisation Intelligente</span>
<div class="btn" style="left:1603px;top:403px;width:137px;height:21px;"></div><span class="t" id="u51" style="top:409px;left:1603px;width:137px;text-align:center;letter-spacing:-0.190px;">Plus d'options</span>
<div class="grp" style="left:1751px;top:372px;width:155px;height:179px;"></div><div class="b" style="left:1756.3px;top:370px;width:141.7px;height:5px;background:#f0f0f0"></div><span class="t" id="u52" style="top:368px;left:1759.3px;letter-spacing:-0.153px;">Optimisation de l'axe linéaire</span>
<div class="chk" style="left:1755px;top:410px"><svg width="11" height="11" viewBox="0 0 11 11" style="position:absolute;left:0;top:0"><path d="M1.5 5.5 L4.2 8.3 L9.6 2.3" fill="none" stroke="#222" stroke-width="1.3"/></svg></div>
<span class="t" id="u53" style="top:412px;left:1772.5px;letter-spacing:-0.176px;">Optimiser axe linéaire</span>
<span class="t" id="u54" style="top:458px;left:1754.5px;letter-spacing:-0.214px;">Décalage d'axe</span>
<div class="spn" style="left:1830px;top:452px;width:72px;height:20px;background:#fff;"></div><div class="b" style="left:1887px;top:454px;width:13px;height:16px;background:#e9e9e9;border:1px solid #c6c6c6;"></div><div class="b" style="left:1887px;top:462px;width:13px;height:1px;background:#c6c6c6;"></div><svg class="b" style="left:1890.5px;top:457.5px" width="6" height="9" viewBox="0 0 6 9"><path d="M0.3 2.8 L3 0 L5.7 2.8 Z" fill="#000"/><path d="M0.3 6.2 L3 9 L5.7 6.2 Z" fill="#000"/></svg><span class="t" id="u55" style="top:458px;right:38px;letter-spacing:0.027px;">-1589.5</span>
<div class="btn" style="left:1756px;top:500px;width:145px;height:21px;"></div><span class="t" id="u56" style="top:506px;left:1756px;width:145px;text-align:center;letter-spacing:-0.182px;">Compensation d'axes</span>
<div class="grp" style="left:1134px;top:564px;width:772px;height:79px;"></div><div class="b" style="left:1140px;top:562px;width:127px;height:5px;background:#f0f0f0"></div><span class="t" id="u57" style="top:560px;left:1143px;letter-spacing:-0.028px;">Joints de départ préférés</span>
<div class="spn" style="left:1144px;top:583px;width:70px;height:20px;background:#fff;"></div><div class="b" style="left:1199px;top:585px;width:13px;height:16px;background:#e9e9e9;border:1px solid #c6c6c6;"></div><div class="b" style="left:1199px;top:593px;width:13px;height:1px;background:#c6c6c6;"></div><svg class="b" style="left:1202.5px;top:588.5px" width="6" height="9" viewBox="0 0 6 9"><path d="M0.3 2.8 L3 0 L5.7 2.8 Z" fill="#000"/><path d="M0.3 6.2 L3 9 L5.7 6.2 Z" fill="#000"/></svg><span class="t" id="u58" style="top:589px;left:1146.5px;letter-spacing:0.057px;">0.0000</span>
<div class="spn" style="left:1216px;top:583px;width:70px;height:20px;background:#fff;"></div><div class="b" style="left:1271px;top:585px;width:13px;height:16px;background:#e9e9e9;border:1px solid #c6c6c6;"></div><div class="b" style="left:1271px;top:593px;width:13px;height:1px;background:#c6c6c6;"></div><svg class="b" style="left:1274.5px;top:588.5px" width="6" height="9" viewBox="0 0 6 9"><path d="M0.3 2.8 L3 0 L5.7 2.8 Z" fill="#000"/><path d="M0.3 6.2 L3 9 L5.7 6.2 Z" fill="#000"/></svg><span class="t" id="u59" style="top:589px;left:1218.5px;letter-spacing:0.057px;">0.0000</span>
<div class="spn" style="left:1288px;top:583px;width:70px;height:20px;background:#fff;"></div><div class="b" style="left:1343px;top:585px;width:13px;height:16px;background:#e9e9e9;border:1px solid #c6c6c6;"></div><div class="b" style="left:1343px;top:593px;width:13px;height:1px;background:#c6c6c6;"></div><svg class="b" style="left:1346.5px;top:588.5px" width="6" height="9" viewBox="0 0 6 9"><path d="M0.3 2.8 L3 0 L5.7 2.8 Z" fill="#000"/><path d="M0.3 6.2 L3 9 L5.7 6.2 Z" fill="#000"/></svg><span class="t" id="u60" style="top:589px;left:1290.5px;letter-spacing:0.057px;">0.0000</span>
<div class="spn" style="left:1360px;top:583px;width:70px;height:20px;background:#fff;"></div><div class="b" style="left:1415px;top:585px;width:13px;height:16px;background:#e9e9e9;border:1px solid #c6c6c6;"></div><div class="b" style="left:1415px;top:593px;width:13px;height:1px;background:#c6c6c6;"></div><svg class="b" style="left:1418.5px;top:588.5px" width="6" height="9" viewBox="0 0 6 9"><path d="M0.3 2.8 L3 0 L5.7 2.8 Z" fill="#000"/><path d="M0.3 6.2 L3 9 L5.7 6.2 Z" fill="#000"/></svg><span class="t" id="u61" style="top:589px;left:1362.5px;letter-spacing:0.057px;">0.0000</span>
<div class="spn" style="left:1432px;top:583px;width:70px;height:20px;background:#fff;"></div><div class="b" style="left:1487px;top:585px;width:13px;height:16px;background:#e9e9e9;border:1px solid #c6c6c6;"></div><div class="b" style="left:1487px;top:593px;width:13px;height:1px;background:#c6c6c6;"></div><svg class="b" style="left:1490.5px;top:588.5px" width="6" height="9" viewBox="0 0 6 9"><path d="M0.3 2.8 L3 0 L5.7 2.8 Z" fill="#000"/><path d="M0.3 6.2 L3 9 L5.7 6.2 Z" fill="#000"/></svg><span class="t" id="u62" style="top:589px;left:1434.5px;letter-spacing:0.057px;">0.0000</span>
<div class="spn" style="left:1504px;top:583px;width:70px;height:20px;background:#fff;"></div><div class="b" style="left:1559px;top:585px;width:13px;height:16px;background:#e9e9e9;border:1px solid #c6c6c6;"></div><div class="b" style="left:1559px;top:593px;width:13px;height:1px;background:#c6c6c6;"></div><svg class="b" style="left:1562.5px;top:588.5px" width="6" height="9" viewBox="0 0 6 9"><path d="M0.3 2.8 L3 0 L5.7 2.8 Z" fill="#000"/><path d="M0.3 6.2 L3 9 L5.7 6.2 Z" fill="#000"/></svg><span class="t" id="u63" style="top:589px;left:1506.5px;letter-spacing:0.057px;">0.0000</span>
<div class="spn" style="left:1576px;top:583px;width:77px;height:20px;background:#fff;"></div><div class="b" style="left:1638px;top:585px;width:13px;height:16px;background:#e9e9e9;border:1px solid #c6c6c6;"></div><div class="b" style="left:1638px;top:593px;width:13px;height:1px;background:#c6c6c6;"></div><svg class="b" style="left:1641.5px;top:588.5px" width="6" height="9" viewBox="0 0 6 9"><path d="M0.3 2.8 L3 0 L5.7 2.8 Z" fill="#000"/><path d="M0.3 6.2 L3 9 L5.7 6.2 Z" fill="#000"/></svg><div class="b" style="left:1577px;top:584px;width:59px;height:18px;background:#00ffff;"></div><span class="t" id="u64" style="top:589px;left:1579.5px;letter-spacing:-0.067px;">-1000.0000</span>
<div class="btn" style="left:1655px;top:582px;width:26px;height:22px;"></div>
<svg class="b" style="left:1660px;top:585px;" width="16" height="16" viewBox="0 0 16 16"><rect x="0.5" y="0.5" width="9.5" height="11.5" fill="#e9e9e9" stroke="#d3d3d3" stroke-width="0.8"/><path d="M4.5 3.5 H15 V13 L12.5 15.5 H4.5 Z" fill="#f6f6f6" stroke="#cfcfcf" stroke-width="0.8"/><path d="M6.5 6.5 H13 M6.5 8.5 H13 M6.5 10.5 H13" stroke="#d8d8d8" stroke-width="0.9"/><path d="M12.5 15.5 L12.5 13 L15 13 Z" fill="#a8a8a8"/></svg>
<div class="btn" style="left:1684px;top:582px;width:26px;height:22px;"></div>
<svg class="b" style="left:1689px;top:584px;" width="16" height="18" viewBox="0 0 16 18"><path d="M5.5 3.2 Q7.5 -0.4 9.5 3.2 Z" fill="#c8c8c8" stroke="#9a9a9a" stroke-width="0.6"/><rect x="2" y="2.8" width="11" height="12" rx="0.8" fill="#d9a86c" stroke="#c48f4e" stroke-width="0.6"/><path d="M5.2 6.2 H12 L14 8.2 V16.6 H5.2 Z" fill="#fbfbfb" stroke="#e2e2e2" stroke-width="0.5"/></svg>
<div class="btn" style="left:1145px;top:612px;width:73px;height:21px;"></div><span class="t" id="u65" style="top:618px;left:1145px;width:73px;text-align:center;letter-spacing:0.263px;">Défaut</span>
<div class="btn" style="left:1220px;top:612px;width:73px;height:21px;"></div><span class="t" id="u66" style="top:618px;left:1220px;width:73px;text-align:center;letter-spacing:-0.114px;">Définir actuels</span>
<div class="cmb" style="left:1295px;top:612px;width:601px;height:20px;"></div><svg class="b" style="left:1880px;top:619.5px" width="10" height="6" viewBox="0 0 10 6"><path d="M0.5 0.8 L5 5.2 L9.5 0.8" fill="none" stroke="#333" stroke-width="1.1"/></svg>
<div class="chk" style="left:1134px;top:652px"></div>
<span class="t" id="u67" style="top:654px;left:1151.3px;letter-spacing:-0.105px;">Mise à jour automatique</span>
<span class="t" id="u68" style="top:675px;left:1134px;letter-spacing:-0.092px;">Toutes les cibles sont atteignables.</span>
<span class="t" id="u69" style="top:688px;left:1134px;letter-spacing:-0.153px;">Vérifiez le parcours.</span>
<svg class="b" style="left:1703px;top:653px;" width="44" height="44" viewBox="0 0 44 44"><circle cx="20" cy="20.6" r="18" fill="url(#ghelp)" stroke="#3b8fe0" stroke-width="2.6"/><circle cx="20" cy="20.6" r="18" fill="none" stroke="#7fd0f5" stroke-width="2.6" stroke-dasharray="40 73.1" stroke-dashoffset="-20"/><text x="20" y="31" font-family="Liberation Sans, sans-serif" font-weight="bold" font-size="30" text-anchor="middle" fill="#3a8ee6">?</text><circle cx="31.5" cy="32" r="9.6" fill="url(#gok)"/><path d="M26 31.5 L30 36.5 L37.5 27.5" fill="none" stroke="#fff" stroke-width="3" stroke-linecap="round" stroke-linejoin="round"/></svg>
<div class="btn" style="left:1751px;top:651px;width:73px;height:47px;"></div><span class="t" id="u70" style="top:670px;left:1751px;width:73px;text-align:center;letter-spacing:0.096px;">Mettre à jour</span>
<div class="btn" style="left:1832px;top:651px;width:73px;height:47px;"></div><span class="t" id="u71" style="top:670px;left:1832px;width:73px;text-align:center;letter-spacing:-0.471px;">Simuler</span>
<div class="b" style="left:0px;top:892px;width:1121px;height:1px;background:#828790;"></div>
<div class="b" style="left:0px;top:893px;width:1915px;height:38px;background:#f0f0f0;"></div>
<div class="btn" style="left:-1px;top:901px;width:26px;height:21px;"></div>
<svg class="b" style="left:4px;top:903px;" width="16" height="16" viewBox="0 0 16 16"><rect x="2" y="2.5" width="2" height="11" fill="url(#gblue)"/><path d="M12.5 2.5 L4.5 8 L12.5 13.5 Z" fill="url(#gblue)"/></svg>
<div class="btn" style="left:30px;top:901px;width:26px;height:21px;"></div>
<svg class="b" style="left:35px;top:903px;" width="16" height="16" viewBox="0 0 16 16"><rect x="4.5" y="4" width="2.4" height="8" fill="url(#gblue)"/><rect x="8.6" y="4" width="2.4" height="8" fill="url(#gblue)"/></svg>
<div class="btn" style="left:61px;top:901px;width:26px;height:21px;"></div>
<svg class="b" style="left:66px;top:903px;" width="16" height="16" viewBox="0 0 16 16"><path d="M5 4 L11.5 8 L5 12 Z" fill="url(#gblue)"/></svg>
<div class="btn" style="left:92px;top:901px;width:26px;height:21px;"></div>
<svg class="b" style="left:97px;top:903px;" width="16" height="16" viewBox="0 0 16 16"><path d="M2.5 4.5 L8 8 L2.5 11.5 Z" fill="url(#gblue)"/><path d="M8 4.5 L13.5 8 L8 11.5 Z" fill="url(#gblue)"/></svg>
<div class="btn" style="left:123px;top:901px;width:26px;height:21px;"></div>
<svg class="b" style="left:128px;top:903px;" width="16" height="16" viewBox="0 0 16 16"><rect x="11" y="2.5" width="2" height="11" fill="url(#gblue)"/><path d="M3 2.5 L11 8 L3 13.5 Z" fill="url(#gblue)"/></svg>
<div class="btn" style="left:154px;top:901px;width:26px;height:21px;"></div>
<svg class="b" style="left:159px;top:903px;" width="16" height="16" viewBox="0 0 16 16"><path d="M2.5 9.5 Q3.5 3.2 8.5 3.2 Q12.6 3.2 13 8 L15 8 L11.8 12.6 L8.6 8 L10.6 8 Q10.2 5.6 8.4 5.6 Q5.4 5.6 4.6 9.5 Z" fill="#1f7ad6"/></svg>
<div class="b" style="left:187px;top:907px;width:1527px;height:8px;background:#c8c8c8;border:1px solid #000;border-radius:4px;border-width:1.5px;"></div>
<div class="b" style="left:185px;top:900px;width:17px;height:22px;background:#0078d7;border:1px solid #000;border-radius:2px;"></div>
<div class="spn" style="left:1717px;top:901px;width:28px;height:20px;background:#fff;"></div><div class="b" style="left:1730px;top:903px;width:13px;height:16px;background:#e9e9e9;border:1px solid #c6c6c6;"></div><div class="b" style="left:1730px;top:911px;width:13px;height:1px;background:#c6c6c6;"></div><svg class="b" style="left:1733.5px;top:906.5px" width="6" height="9" viewBox="0 0 6 9"><path d="M0.3 2.8 L3 0 L5.7 2.8 Z" fill="#000"/><path d="M0.3 6.2 L3 9 L5.7 6.2 Z" fill="#000"/></svg><span class="t" id="u72" style="top:907px;left:1721px;">1</span>
<span class="t" id="u73" style="top:907px;left:1747.5px;font-weight:bold;letter-spacing:0.125px;">RhinoCrv</span>
<span class="t" id="u74" style="top:907px;left:1802px;letter-spacing:-0.077px;">temps : 0.0s</span>
<div class="btn" style="left:1886px;top:901px;width:26px;height:21px;"></div>
<svg class="b" style="left:1891px;top:904px;" width="16" height="16" viewBox="0 0 16 16"><path d="M3 3.2 L13 13 M13 3.2 L3 13" stroke="#e0454d" stroke-width="3.4" stroke-linecap="round" fill="none"/></svg>
</body></html>
